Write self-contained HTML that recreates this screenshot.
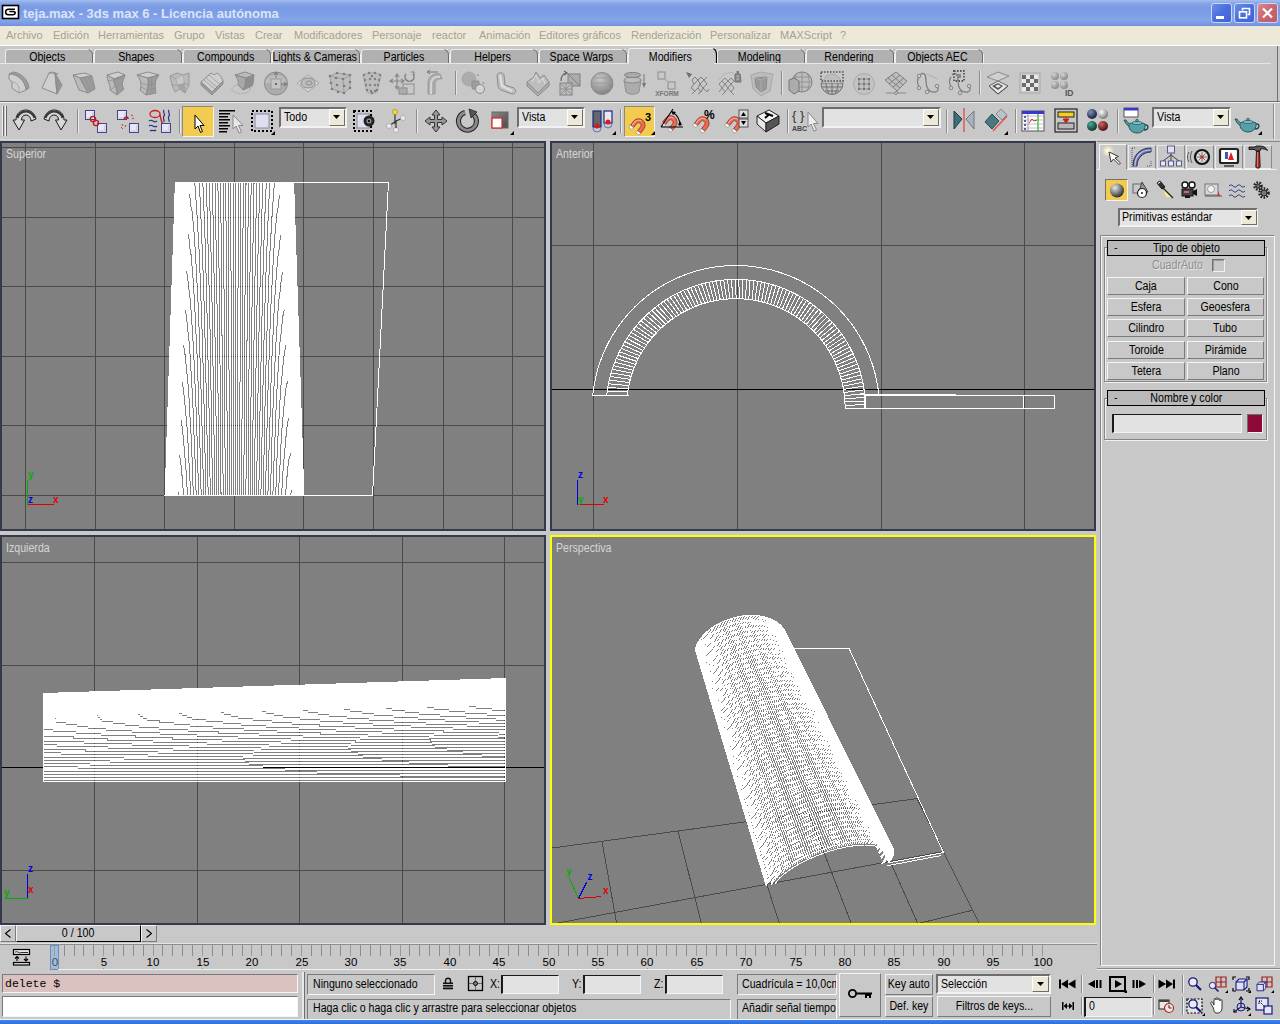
<!DOCTYPE html>
<html lang="es"><head><meta charset="utf-8"><title>teja.max - 3ds max 6 - Licencia autónoma</title>
<style>
html,body{margin:0;padding:0;}
body{width:1280px;height:1024px;position:relative;overflow:hidden;background:#c8c8c8;font-family:"Liberation Sans",sans-serif;font-size:11px;color:#000;}
div,svg{position:absolute;box-sizing:border-box;}
.t{white-space:nowrap;line-height:13px;}
.c{white-space:nowrap;line-height:13px;text-align:center;}
.btn{background:#c8c8c8;border:1px solid;border-color:#f4f4f4 #7a7a7a #7a7a7a #f4f4f4;text-align:center;white-space:nowrap;}
.sunk{border:1px solid;border-color:#7a7a7a #f4f4f4 #f4f4f4 #7a7a7a;}
svg{overflow:visible}
.sl,.sc{display:inline-block;font-size:12.5px;letter-spacing:0;transform:scaleX(.85);transform-origin:0 50%;white-space:nowrap}
.sc{transform-origin:50% 50%}
.fc{display:flex;justify-content:center;white-space:nowrap}
</style></head>
<body>
<!-- top -->
<div style="left:0px;top:0px;width:1280px;height:26px;background:linear-gradient(#a3bdee 0px,#8aa8e8 3px,#7b9ae4 7px,#7d9ee6 14px,#86a6ea 20px,#7a98e2 24px,#6f8cdc 26px);"></div>
<svg style="left:2px;top:5px" width="17" height="14" viewBox="0 0 17 14" ><rect x="0.5" y="0.5" width="16" height="13" fill="#fff" stroke="#000" stroke-width="1.6"/><path d="M13 4.2H6.5C4.6 4.2 3.6 5.4 3.6 7s1 2.8 2.9 2.8H10.6C12.4 9.800000000000001 13.2 9 13.2 7.800000000000001S12.400000000000002 6.4 11.2 6.4H7.3" fill="none" stroke="#000" stroke-width="1.5"/></svg>
<div class="t" style="left:23px;top:6px;font-weight:bold;font-size:13px;color:#dbe5f9;line-height:16px;">teja.max - 3ds max 6 - Licencia autónoma</div>
<div style="left:1211px;top:3px;width:21px;height:20px;background:linear-gradient(135deg,#6c8eea,#4a6fdd 50%,#3f63d4);border:1px solid #c9d6f4;border-radius:3px;"></div>
<div style="left:1234px;top:3px;width:21px;height:20px;background:linear-gradient(135deg,#6c8eea,#4a6fdd 50%,#3f63d4);border:1px solid #c9d6f4;border-radius:3px;"></div>
<div style="left:1257px;top:3px;width:21px;height:20px;background:linear-gradient(135deg,#d98a8f,#c8666f 50%,#bf5a66);border:1px solid #c9d6f4;border-radius:3px;"></div>
<div style="left:1216px;top:16px;width:8px;height:3px;background:#fff;"></div>
<svg style="left:1234px;top:3px" width="21" height="20" viewBox="0 0 21 20" ><path d="M8.5 7.500000000000001V5.5H15.5V11.5H13.5" fill="none" stroke="#fff" stroke-width="1.6"/><rect x="5.5" y="8.8" width="7" height="6" fill="none" stroke="#fff" stroke-width="1.6"/></svg>
<svg style="left:1257px;top:3px" width="21" height="20" viewBox="0 0 21 20" ><path d="M6 5.500000000000001L15 14.5M15 5.500000000000001L6 14.5" stroke="#fff" stroke-width="2.2"/></svg>
<div style="left:0px;top:26px;width:1280px;height:19px;background:#ece9d8;"></div>
<div class="t m" style="left:6px;top:29px;color:#a5a294;">Archivo</div>
<div class="t m" style="left:53px;top:29px;color:#a5a294;">Edición</div>
<div class="t m" style="left:98px;top:29px;color:#a5a294;">Herramientas</div>
<div class="t m" style="left:174px;top:29px;color:#a5a294;">Grupo</div>
<div class="t m" style="left:215px;top:29px;color:#a5a294;">Vistas</div>
<div class="t m" style="left:255px;top:29px;color:#a5a294;">Crear</div>
<div class="t m" style="left:294px;top:29px;color:#a5a294;">Modificadores</div>
<div class="t m" style="left:372px;top:29px;color:#a5a294;">Personaje</div>
<div class="t m" style="left:432px;top:29px;color:#a5a294;">reactor</div>
<div class="t m" style="left:479px;top:29px;color:#a5a294;">Animación</div>
<div class="t m" style="left:539px;top:29px;color:#a5a294;">Editores gráficos</div>
<div class="t m" style="left:631px;top:29px;color:#a5a294;">Renderización</div>
<div class="t m" style="left:710px;top:29px;color:#a5a294;">Personalizar</div>
<div class="t m" style="left:780px;top:29px;color:#a5a294;">MAXScript</div>
<div class="t m" style="left:840px;top:29px;color:#a5a294;">?</div>
<div style="left:0px;top:45px;width:1280px;height:1px;background:#fff;"></div>
<div style="left:5px;top:49px;width:87px;height:15px;background:#b1b1b1;border-top:1px solid #ececec;border-left:1px solid #ececec;border-radius:3px 0 0 0;"></div>
<svg style="left:86px;top:48px" width="8" height="17" viewBox="0 0 8 17" ><path d="M2.5 1.5C5 2.5 6.500000000000001 4 6.500000000000001 7V16" fill="none" stroke="#6b6b6b" stroke-width="1"/><path d="M7.500000000000001 6V16" fill="none" stroke="#f0f0f0" stroke-width="1"/></svg>
<div class="fc" style="left:5px;top:51px;width:85px;height:13px;line-height:13px;"><span class="sc">Objects</span></div>
<div style="left:94px;top:49px;width:87px;height:15px;background:#b1b1b1;border-top:1px solid #ececec;border-left:1px solid #ececec;border-radius:3px 0 0 0;"></div>
<svg style="left:175px;top:48px" width="8" height="17" viewBox="0 0 8 17" ><path d="M2.5 1.5C5 2.5 6.500000000000001 4 6.500000000000001 7V16" fill="none" stroke="#6b6b6b" stroke-width="1"/><path d="M7.500000000000001 6V16" fill="none" stroke="#f0f0f0" stroke-width="1"/></svg>
<div class="fc" style="left:94px;top:51px;width:85px;height:13px;line-height:13px;"><span class="sc">Shapes</span></div>
<div style="left:183px;top:49px;width:87px;height:15px;background:#b1b1b1;border-top:1px solid #ececec;border-left:1px solid #ececec;border-radius:3px 0 0 0;"></div>
<svg style="left:264px;top:48px" width="8" height="17" viewBox="0 0 8 17" ><path d="M2.5 1.5C5 2.5 6.500000000000001 4 6.500000000000001 7V16" fill="none" stroke="#6b6b6b" stroke-width="1"/><path d="M7.500000000000001 6V16" fill="none" stroke="#f0f0f0" stroke-width="1"/></svg>
<div class="fc" style="left:183px;top:51px;width:85px;height:13px;line-height:13px;"><span class="sc">Compounds</span></div>
<div style="left:272px;top:49px;width:87px;height:15px;background:#b1b1b1;border-top:1px solid #ececec;border-left:1px solid #ececec;border-radius:3px 0 0 0;"></div>
<svg style="left:353px;top:48px" width="8" height="17" viewBox="0 0 8 17" ><path d="M2.5 1.5C5 2.5 6.500000000000001 4 6.500000000000001 7V16" fill="none" stroke="#6b6b6b" stroke-width="1"/><path d="M7.500000000000001 6V16" fill="none" stroke="#f0f0f0" stroke-width="1"/></svg>
<div class="fc" style="left:272px;top:51px;width:85px;height:13px;line-height:13px;"><span class="sc">Lights &amp; Cameras</span></div>
<div style="left:361px;top:49px;width:87px;height:15px;background:#b1b1b1;border-top:1px solid #ececec;border-left:1px solid #ececec;border-radius:3px 0 0 0;"></div>
<svg style="left:442px;top:48px" width="8" height="17" viewBox="0 0 8 17" ><path d="M2.5 1.5C5 2.5 6.500000000000001 4 6.500000000000001 7V16" fill="none" stroke="#6b6b6b" stroke-width="1"/><path d="M7.500000000000001 6V16" fill="none" stroke="#f0f0f0" stroke-width="1"/></svg>
<div class="fc" style="left:361px;top:51px;width:85px;height:13px;line-height:13px;"><span class="sc">Particles</span></div>
<div style="left:450px;top:49px;width:87px;height:15px;background:#b1b1b1;border-top:1px solid #ececec;border-left:1px solid #ececec;border-radius:3px 0 0 0;"></div>
<svg style="left:531px;top:48px" width="8" height="17" viewBox="0 0 8 17" ><path d="M2.5 1.5C5 2.5 6.500000000000001 4 6.500000000000001 7V16" fill="none" stroke="#6b6b6b" stroke-width="1"/><path d="M7.500000000000001 6V16" fill="none" stroke="#f0f0f0" stroke-width="1"/></svg>
<div class="fc" style="left:450px;top:51px;width:85px;height:13px;line-height:13px;"><span class="sc">Helpers</span></div>
<div style="left:539px;top:49px;width:87px;height:15px;background:#b1b1b1;border-top:1px solid #ececec;border-left:1px solid #ececec;border-radius:3px 0 0 0;"></div>
<svg style="left:620px;top:48px" width="8" height="17" viewBox="0 0 8 17" ><path d="M2.5 1.5C5 2.5 6.500000000000001 4 6.500000000000001 7V16" fill="none" stroke="#6b6b6b" stroke-width="1"/><path d="M7.500000000000001 6V16" fill="none" stroke="#f0f0f0" stroke-width="1"/></svg>
<div class="fc" style="left:539px;top:51px;width:85px;height:13px;line-height:13px;"><span class="sc">Space Warps</span></div>
<div style="left:628px;top:48px;width:88px;height:16px;background:#c8c8c8;border-top:1px solid #f0f0f0;border-left:1px solid #f0f0f0;border-radius:3px 0 0 0;"></div>
<svg style="left:708px;top:47px" width="10" height="18" viewBox="0 0 10 18" ><path d="M5.500000000000001 1.5C8 3 8.5 5 8.5 8V17" fill="none" stroke="#000" stroke-width="1.2"/></svg>
<div class="fc" style="left:628px;top:51px;width:85px;height:13px;line-height:13px;"><span class="sc">Modifiers</span></div>
<div style="left:717px;top:49px;width:87px;height:15px;background:#b1b1b1;border-top:1px solid #ececec;border-left:1px solid #ececec;border-radius:3px 0 0 0;"></div>
<svg style="left:798px;top:48px" width="8" height="17" viewBox="0 0 8 17" ><path d="M2.5 1.5C5 2.5 6.500000000000001 4 6.500000000000001 7V16" fill="none" stroke="#6b6b6b" stroke-width="1"/><path d="M7.500000000000001 6V16" fill="none" stroke="#f0f0f0" stroke-width="1"/></svg>
<div class="fc" style="left:717px;top:51px;width:85px;height:13px;line-height:13px;"><span class="sc">Modeling</span></div>
<div style="left:806px;top:49px;width:87px;height:15px;background:#b1b1b1;border-top:1px solid #ececec;border-left:1px solid #ececec;border-radius:3px 0 0 0;"></div>
<svg style="left:887px;top:48px" width="8" height="17" viewBox="0 0 8 17" ><path d="M2.5 1.5C5 2.5 6.500000000000001 4 6.500000000000001 7V16" fill="none" stroke="#6b6b6b" stroke-width="1"/><path d="M7.500000000000001 6V16" fill="none" stroke="#f0f0f0" stroke-width="1"/></svg>
<div class="fc" style="left:806px;top:51px;width:85px;height:13px;line-height:13px;"><span class="sc">Rendering</span></div>
<div style="left:895px;top:49px;width:87px;height:15px;background:#b1b1b1;border-top:1px solid #ececec;border-left:1px solid #ececec;border-radius:3px 0 0 0;"></div>
<svg style="left:976px;top:48px" width="8" height="17" viewBox="0 0 8 17" ><path d="M2.5 1.5C5 2.5 6.500000000000001 4 6.500000000000001 7V16" fill="none" stroke="#6b6b6b" stroke-width="1"/><path d="M7.500000000000001 6V16" fill="none" stroke="#f0f0f0" stroke-width="1"/></svg>
<div class="fc" style="left:895px;top:51px;width:85px;height:13px;line-height:13px;"><span class="sc">Objects AEC</span></div>
<div style="left:0px;top:63px;width:1271px;height:1px;background:#e6e6e6;"></div>
<div style="left:1277px;top:46px;width:1px;height:56px;background:#6e6e6e;"></div>
<div style="left:629px;top:63px;width:85px;height:1px;background:#c8c8c8;"></div>
<div style="left:0px;top:101px;width:1280px;height:1px;background:#6e6e6e;"></div>
<div style="left:0px;top:102px;width:1280px;height:1px;background:#efefef;"></div>
<div style="left:0px;top:139px;width:1280px;height:1px;background:#d8d8d0;"></div>
<!-- toolbars -->
<svg style="left:4px;top:67px" width="32" height="32" viewBox="-16 -16 32 32"><path d="M6 7L9 5C8 -4 1 -10 -7 -11L-11 -9C-3 -9 5 -3 6 7Z" fill="#9c9c9c" stroke="#8c8c8c" stroke-width="1" stroke-linejoin="round"/><path d="M-11 -9C-3 -9 5 -3 6 7L-1 10L-8 5V-1L-11 -4Z" fill="#cfcfcf" stroke="#8c8c8c" stroke-width="1" stroke-linejoin="round"/><path d="M-8 -1C-3 -1 0 3 -1 10" fill="none" stroke="#a8a8a8"/></svg>
<svg style="left:36px;top:67px" width="32" height="32" viewBox="-16 -16 32 32"><path d="M-3 -10H3L5 11L-10 5Z" fill="#cfcfcf" stroke="#8c8c8c" stroke-width="1" stroke-linejoin="round"/><path d="M3 -10L10 2L5 11Z" fill="#9c9c9c" stroke="#8c8c8c" stroke-width="1" stroke-linejoin="round"/><path d="M4 -6L8 3M4 -2L7 6M4 2L6 8" stroke="#888" stroke-width="0.7"/><path d="M-3 -10L0 -11L6 -9L3 -10" fill="#bababa" stroke="#8c8c8c" stroke-width="1" stroke-linejoin="round"/></svg>
<svg style="left:68px;top:67px" width="32" height="32" viewBox="-16 -16 32 32"><path d="M-11 -8L1 -10L8 -7L-4 -5Z" fill="#cfcfcf" stroke="#8c8c8c" stroke-width="1" stroke-linejoin="round"/><path d="M-11 -8L-4 -5L4 10L-5 7Z" fill="#bababa" stroke="#8c8c8c" stroke-width="1" stroke-linejoin="round"/><path d="M-4 -5L8 -7L11 6L4 10Z" fill="#9c9c9c" stroke="#8c8c8c" stroke-width="1" stroke-linejoin="round"/><path d="M0 -5L7 7M4 -6L10 4" stroke="#8a8a8a" stroke-width="0.6"/></svg>
<svg style="left:100px;top:67px" width="32" height="32" viewBox="-16 -16 32 32"><path d="M-9 -8L2 -11L9 -8L-2 -4Z" fill="#cfcfcf" stroke="#8c8c8c" stroke-width="1" stroke-linejoin="round"/><path d="M-9 -8L-2 -4C-3 1 2 4 1 12L-6 7C-5 2 -9 -2 -9 -8Z" fill="#bababa" stroke="#8c8c8c" stroke-width="1" stroke-linejoin="round"/><path d="M-2 -4L9 -8C8 -3 4 0 8 6L1 12C2 4 -3 1 -2 -4Z" fill="#9c9c9c" stroke="#8c8c8c" stroke-width="1" stroke-linejoin="round"/><path d="M-6 7L3 1M-8 -2L6 -5" stroke="#8c8c8c" stroke-width="0.7"/></svg>
<svg style="left:132px;top:67px" width="32" height="32" viewBox="-16 -16 32 32"><path d="M-11 -8L0 -11L11 -8L0 -5Z" fill="#cfcfcf" stroke="#8c8c8c" stroke-width="1" stroke-linejoin="round"/><path d="M-11 -8L0 -5C1 0 0 6 -2 12L-8 7C-6 2 -7 -3 -11 -8Z" fill="#bababa" stroke="#8c8c8c" stroke-width="1" stroke-linejoin="round"/><path d="M0 -5L11 -8C6 -2 7 4 8 10L-2 12C0 6 1 0 0 -5Z" fill="#9c9c9c" stroke="#8c8c8c" stroke-width="1" stroke-linejoin="round"/><path d="M-7 0L0 2L7 0M-7 4L-1 7L8 5M4 -6C3 0 4 5 4 11" fill="none" stroke="#8a8a8a" stroke-width="0.6"/></svg>
<svg style="left:164px;top:67px" width="32" height="32" viewBox="-16 -16 32 32"><path d="M-10 -7L-3 -10L3 -8L9 -10L9 2L5 10L0 6L-5 9L-8 2Z" fill="#bababa" stroke="#9a9a9a" stroke-linejoin="round"/><path d="M-10 -7L-4 -4L3 -8M-4 -4L-2 2L0 6M3 -8L4 0L5 10M-8 2L-2 2L4 0L9 2" fill="none" stroke="#9a9a9a" stroke-width="0.8"/><path d="M-4 -4L3 -8L4 0L-2 2Z" fill="#cfcfcf" stroke="none" opacity="0.7"/><path d="M-2 2L4 0L5 10L0 6Z" fill="#9c9c9c" opacity="0.7"/></svg>
<svg style="left:196px;top:67px" width="32" height="32" viewBox="-16 -16 32 32"><path d="M-11 -1L-1 -10C1 -8 3 -8 5 -10C7 -9 9 -7 11 -2L0 9Z" fill="#cfcfcf" stroke="#8c8c8c" stroke-width="1" stroke-linejoin="round"/><path d="M-11 -1L0 9L11 -2V1L0 12L-11 2Z" fill="#9c9c9c" stroke="#8c8c8c" stroke-width="1" stroke-linejoin="round"/><path d="M-6 -5L5 4M-3 -8C-1 -6 6 0 8 1M-8 -3L3 6" fill="none" stroke="#909090" stroke-width="0.7"/></svg>
<svg style="left:228px;top:67px" width="32" height="32" viewBox="-16 -16 32 32"><ellipse cx="-3" cy="6" rx="9" ry="4.500000000000001" fill="none" stroke="#a8a8a8" stroke-dasharray="2 1"/><path d="M-9 -8L1 -11L10 -8L2 -5Z" fill="#bababa" stroke="#8c8c8c" stroke-width="1" stroke-linejoin="round"/><path d="M-9 -8L2 -5C1 -1 2 3 -1 7L-6 2C-5 -2 -7 -5 -9 -8Z" fill="#a8a8a8" stroke="#8c8c8c" stroke-width="1" stroke-linejoin="round"/><path d="M2 -5L10 -8C9 -4 10 0 8 3L-1 7C2 3 1 -1 2 -5Z" fill="#8e8e8e" stroke="#8c8c8c" stroke-width="1" stroke-linejoin="round"/></svg>
<svg style="left:260px;top:67px" width="32" height="32" viewBox="-16 -16 32 32"><circle cx="0" cy="0.5" r="11.5" fill="#acacac" stroke="#8c8c8c"/><path d="M-11 0A11.5 11.5 0 0 1 11 0" fill="#bdbdbd" stroke="none"/><rect x="-5" y="-4" width="10" height="10" fill="#c4c4c4" stroke="#999"/><rect x="-1" y="0" width="2" height="2" fill="#666"/><path d="M0 -5V-10M-2 -8L0 -11L2 -8M5 1H10M8 -1L11 1L8 3" fill="none" stroke="#777"/></svg>
<svg style="left:292px;top:67px" width="32" height="32" viewBox="-16 -16 32 32"><path d="M-11 0L0 -8L11 0L0 9Z" fill="#d4d4d4" stroke="#a6a6a6"/><ellipse cx="0" cy="0" rx="7" ry="5" fill="#bdbdbd" stroke="#8c8c8c"/><ellipse cx="1" cy="0" rx="3" ry="2" fill="none" stroke="#8c8c8c"/></svg>
<svg style="left:324px;top:67px" width="32" height="32" viewBox="-16 -16 32 32"><path d="M-10 -7L-3 -10L10 -8L10 5L4 10L-8 6Z" fill="#bdbdbd" stroke="#a0a0a0"/><path d="M-10 -7L3 -4L10 -8M3 -4L4 10" fill="none" stroke="#a0a0a0"/><circle cx="-10" cy="-7" r="1.3" fill="#7d7d7d"/><circle cx="-4" cy="-5" r="1.3" fill="#7d7d7d"/><circle cx="3" cy="-4" r="1.3" fill="#7d7d7d"/><circle cx="-3" cy="-10" r="1.3" fill="#7d7d7d"/><circle cx="4" cy="-9" r="1.3" fill="#7d7d7d"/><circle cx="10" cy="-8" r="1.3" fill="#7d7d7d"/><circle cx="-9" cy="0" r="1.3" fill="#7d7d7d"/><circle cx="-3" cy="2" r="1.3" fill="#7d7d7d"/><circle cx="4" cy="3" r="1.3" fill="#7d7d7d"/><circle cx="10" cy="-1" r="1.3" fill="#7d7d7d"/><circle cx="-8" cy="6" r="1.3" fill="#7d7d7d"/><circle cx="-2" cy="9" r="1.3" fill="#7d7d7d"/><circle cx="4" cy="10" r="1.3" fill="#7d7d7d"/><circle cx="10" cy="5" r="1.3" fill="#7d7d7d"/></svg>
<svg style="left:356px;top:67px" width="32" height="32" viewBox="-16 -16 32 32"><path d="M-9 -8C-4 -11 4 -11 9 -8L5 9C2 11 -2 11 -5 9Z" fill="#bdbdbd" stroke="#a4a4a4"/><circle cx="-8" cy="-8" r="1.2" fill="#808080"/><circle cx="-3" cy="-10" r="1.2" fill="#808080"/><circle cx="3" cy="-10" r="1.2" fill="#808080"/><circle cx="8" cy="-8" r="1.2" fill="#808080"/><circle cx="-7" cy="-3" r="1.2" fill="#808080"/><circle cx="-2" cy="-4" r="1.2" fill="#808080"/><circle cx="3" cy="-4" r="1.2" fill="#808080"/><circle cx="7" cy="-3" r="1.2" fill="#808080"/><circle cx="-6" cy="2" r="1.2" fill="#808080"/><circle cx="-2" cy="2" r="1.2" fill="#808080"/><circle cx="3" cy="2" r="1.2" fill="#808080"/><circle cx="6" cy="2" r="1.2" fill="#808080"/><circle cx="-5" cy="7" r="1.2" fill="#808080"/><circle cx="-1" cy="8" r="1.2" fill="#808080"/><circle cx="3" cy="8" r="1.2" fill="#808080"/><circle cx="5" cy="7" r="1.2" fill="#808080"/><circle cx="0" cy="-7" r="1.2" fill="#808080"/><circle cx="0" cy="10" r="1.2" fill="#808080"/></svg>
<svg style="left:388px;top:67px" width="32" height="32" viewBox="-16 -16 32 32"><rect x="-1" y="1" width="11" height="10" fill="none" stroke="#8c8c8c"/><rect x="-5" y="5" width="8" height="6" fill="#acacac" stroke="#8c8c8c"/><path d="M-7 -8V5M-13 -2H-1M-9 -6L-7 -9L-5 -6M-9 3L-7 6L-5 3M-11 -4L-14 -2L-11 0M-3 -4L0 -2L-3 0" fill="none" stroke="#888" stroke-width="1.2"/><path d="M2 -9A4.500000000000001 4.500000000000001 0 1 0 9 -9" fill="none" stroke="#808080" stroke-width="1.5"/><path d="M7 -11H10V-8" fill="none" stroke="#808080"/></svg>
<svg style="left:419px;top:67px" width="32" height="32" viewBox="-16 -16 32 32"><path d="M-7 11V0C-7 -6 -2 -10 5 -9L7 -4C2 -5 0 -2 0 2V11Z" fill="#acacac" stroke="#9a9a9a"/><path d="M-4 11V1C-4 -4 0 -7 5 -6" fill="none" stroke="#d4d4d4" stroke-width="2"/><path d="M-7 -11H3M-5 -13L-8 -11L-5 -9" fill="none" stroke="#777"/></svg>
<div style="left:455px;top:71px;width:1px;height:24px;background:#8c8c8c;"></div>
<div style="left:456px;top:71px;width:1px;height:24px;background:#e4e4e4;"></div>
<svg style="left:458px;top:67px" width="32" height="32" viewBox="-16 -16 32 32"><circle cx="-5" cy="-4" r="7" fill="#acacac" stroke="#a8a8a8"/><rect x="-2" y="-2" width="7" height="8" rx="1" fill="#9e9e9e" stroke="#8c8c8c"/><circle cx="6" cy="6" r="4.500000000000001" fill="#d4d4d4" stroke="#8c8c8c"/><path d="M3 -9L5 -7M9 -1L10 1" stroke="#8c8c8c"/></svg>
<svg style="left:490px;top:67px" width="32" height="32" viewBox="-16 -16 32 32"><path d="M-9 -8C-8 -11 -3 -11 -2 -8L-1 2L8 5C11 7 10 11 6 11L-5 7C-7 6 -8 4 -8 2Z" fill="#c0c0c0" stroke="#8c8c8c" stroke-width="1" stroke-linejoin="round"/><path d="M-6 -8L-4 3L6 8" fill="none" stroke="#e0e0e0" stroke-width="2"/></svg>
<svg style="left:522px;top:67px" width="32" height="32" viewBox="-16 -16 32 32"><path d="M-11 -1L-4 -6L-2 -11L2 -5L6 -8L11 -1L0 10Z" fill="#bdbdbd" stroke="#8c8c8c" stroke-width="1" stroke-linejoin="round"/><path d="M-11 -1V3L0 13L11 3V-1L0 10Z" fill="#acacac" stroke="#8c8c8c" stroke-width="1" stroke-linejoin="round"/><path d="M-6 -1L-2 -8L1 0L5 -5L7 1" fill="none" stroke="#ddd"/></svg>
<svg style="left:554px;top:67px" width="32" height="32" viewBox="-16 -16 32 32"><rect x="-2" y="-9" width="12" height="12" fill="#acacac" stroke="#808080"/><path d="M-2 -9L10 3" stroke="#808080"/><rect x="-10" y="0" width="12" height="12" fill="#bdbdbd" stroke="#808080"/><path d="M-10 6H2M-4 0V12M-10 0L2 12M-10 12L2 0" stroke="#909090" fill="none"/><path d="M-9 -2C-9 -7 -7 -9 -4 -10M-6 -12L-3 -10L-6 -8" fill="none" stroke="#666" stroke-width="1.3"/></svg>
<svg style="left:586px;top:67px" width="32" height="32" viewBox="-16 -16 32 32"><defs><radialGradient id="sg" cx="0.4" cy="0.3" r="0.7"><stop offset="0" stop-color="#c8c8c8"/><stop offset="1" stop-color="#848484"/></radialGradient></defs><circle cx="0" cy="0.5" r="11" fill="url(#sg)" stroke="#8c8c8c"/><path d="M-11 0H11M-9 -5H9M-9 5H9" stroke="#9c9c9c" fill="none"/></svg>
<svg style="left:617px;top:67px" width="32" height="32" viewBox="-16 -16 32 32"><path d="M-9 -3L-7 9C-4 12 3 12 6 9L8 -3Z" fill="#acacac" stroke="#909090"/><ellipse cx="-0.5" cy="-3" rx="8.5" ry="3" fill="#bdbdbd" stroke="#888"/><ellipse cx="-0.5" cy="-8" rx="8" ry="2.5" fill="#acacac" stroke="#808080"/><path d="M11 -9V3" stroke="#777"/><path d="M9 0H13L11 5Z" fill="#777"/></svg>
<svg style="left:651px;top:67px" width="32" height="32" viewBox="-16 -16 32 32"><rect x="-9" y="-11" width="7" height="7" fill="none" stroke="#8c8c8c"/><rect x="1" y="-1" width="7" height="7" fill="none" stroke="#8c8c8c"/><path d="M-2 -4L1 -1" stroke="#b4b4b4" stroke-width="2"/><text x="0" y="13" font-size="6.5" font-weight="bold" text-anchor="middle" fill="#767676" font-family="Liberation Sans, sans-serif">XFORM</text></svg>
<svg style="left:683px;top:67px" width="32" height="32" viewBox="-16 -16 32 32"><path d="M-13 -11L-7 -9L-10 -5Z" fill="#6e6e6e"/><path d="M-7 -3L-4 -6L-1 -3L2 -6L5 -3L8 -6M-7 -3L-5 1L-1 -3L1 1L5 -3L8 1M-5 1L-8 5L-4 8L-1 5L1 1M1 1L4 5L8 1M-1 5L2 9L4 5L8 9M-4 8L-7 11M2 9L-1 11M8 9L10 6" fill="none" stroke="#7e7e7e" stroke-width="1"/></svg>
<svg style="left:714px;top:67px" width="32" height="32" viewBox="-16 -16 32 32"><path d="M-11 1L-8 -2L-5 1L-2 -2L1 1L4 -2M-11 1L-8 5L-5 1M-5 1L-2 5L1 1L4 5M-8 5L-11 9M-8 5L-5 9L-2 5L1 9L4 5M-8 -2L-5 -5L-2 -2L1 -5L4 -2M-5 9L-8 12M1 9L4 12" fill="none" stroke="#858585"/><path d="M-11 -3C-7 -10 -1 -11 4 -10" fill="none" stroke="#b4b4b4"/><path d="M5 -9H10L11 -1H5Z" fill="#8c8c8c" stroke="#707070"/><rect x="6.500000000000001" y="-12" width="2.5" height="3" fill="#7a7a7a"/><path d="M6.500000000000001 -7H9M6.500000000000001 -4H9" stroke="#ccc" stroke-width="0.8"/></svg>
<svg style="left:746px;top:67px" width="32" height="32" viewBox="-16 -16 32 32"><path d="M-11 -8L-2 -11L11 -9L8 8L-1 13L-9 6Z" fill="#bcbcbc" stroke="#a8a8a8"/><path d="M-7 -5L5 -6L4 6L-1 9L-6 4Z" fill="#999" stroke="#8c8c8c"/><path d="M-7 -5L-1 -3L-1 9M-1 -3L5 -6" fill="none" stroke="#aaa"/></svg>
<div style="left:781px;top:71px;width:1px;height:24px;background:#8c8c8c;"></div>
<div style="left:782px;top:71px;width:1px;height:24px;background:#e4e4e4;"></div>
<svg style="left:784px;top:67px" width="32" height="32" viewBox="-16 -16 32 32"><circle cx="2" cy="-1" r="10" fill="#bdbdbd" stroke="#808080"/><path d="M-8 -1H12M-6 -6H10M-6 4H10M2 -11V9M-3 -10C-6 -4 -6 2 -3 8M7 -10C10 -4 10 2 7 8" fill="none" stroke="#8a8a8a" stroke-width="0.8"/><path d="M-11 -3L-6 -5L-1 -2V8L-6 11L-11 7Z" fill="#acacac" stroke="#777"/></svg>
<svg style="left:816px;top:67px" width="32" height="32" viewBox="-16 -16 32 32"><path d="M-11 0A11 11.5 0 0 0 11 0Z" fill="#bdbdbd" stroke="#707070"/><path d="M-10 4H10M-7 8H7M-6 0C-6 5 -4 9 -3 11M0 0V11.5M6 0C6 5 4 9 3 11" fill="none" stroke="#707070"/><path d="M-9 0A9 9 0 0 1 9 0" fill="#bdbdbd" stroke="#aaa"/><rect x="-11" y="-11" width="22" height="9" fill="none" stroke="#555" stroke-width="1.6" stroke-dasharray="1.6 1.4"/></svg>
<svg style="left:848px;top:67px" width="32" height="32" viewBox="-16 -16 32 32"><circle cx="0" cy="1" r="10.5" fill="#c2c2c2" stroke="#aaa"/><path d="M-5 -4H5V6H-5ZM0 -4V6M-5 1H5" fill="none" stroke="#888"/><rect x="-6" y="-5" width="2" height="2" fill="#777"/><rect x="-6" y="0" width="2" height="2" fill="#777"/><rect x="-6" y="5" width="2" height="2" fill="#777"/><rect x="-1" y="-5" width="2" height="2" fill="#777"/><rect x="-1" y="0" width="2" height="2" fill="#777"/><rect x="-1" y="5" width="2" height="2" fill="#777"/><rect x="4" y="-5" width="2" height="2" fill="#777"/><rect x="4" y="0" width="2" height="2" fill="#777"/><rect x="4" y="5" width="2" height="2" fill="#777"/></svg>
<svg style="left:880px;top:67px" width="32" height="32" viewBox="-16 -16 32 32"><path d="M0 -11L11 -2L1 8L-11 -3Z" fill="#bdbdbd" stroke="#808080"/><path d="M-4 -8L7 2M-8 -5L4 5M4 -8L-7 1M8 -5L-3 4" fill="none" stroke="#808080"/><path d="M-10 10H10M1 8V10" stroke="#888" fill="none"/><circle cx="0" cy="10" r="1.5" fill="#ccc" stroke="#888"/></svg>
<svg style="left:912px;top:67px" width="32" height="32" viewBox="-16 -16 32 32"><path d="M-9 -6C-12 -2 -10 2 -9 4M-8 -8C-4 -12 -2 -8 -2 -2C-2 4 0 10 8 9C11 8 10 4 9 3" fill="none" stroke="#808080" stroke-width="1.3"/><path d="M-2 -9L10 -4" stroke="#b0b0b0"/><circle cx="-9" cy="-7" r="1.8" fill="#ccc" stroke="#888"/><circle cx="-9" cy="5" r="1.8" fill="#ccc" stroke="#888"/><circle cx="-1" cy="9" r="1.8" fill="#ccc" stroke="#888"/><circle cx="9" cy="3" r="1.8" fill="#ccc" stroke="#888"/></svg>
<svg style="left:944px;top:67px" width="32" height="32" viewBox="-16 -16 32 32"><path d="M-9 -6C-12 -2 -10 2 -9 4M-8 -8C-4 -12 -2 -8 -2 -2C-2 4 0 10 8 9C11 8 10 4 9 3" fill="none" stroke="#808080" stroke-width="1.3"/><rect x="-6" y="-12" width="10" height="10" fill="none" stroke="#555" stroke-width="1.8" stroke-dasharray="1.5 1.5"/><rect x="-3" y="-9" width="4" height="4" fill="#888"/><circle cx="-9" cy="5" r="1.8" fill="#ccc" stroke="#888"/><circle cx="0" cy="10" r="1.8" fill="#ccc" stroke="#888"/><circle cx="9" cy="3" r="1.8" fill="#ccc" stroke="#888"/></svg>
<div style="left:979px;top:71px;width:1px;height:24px;background:#8c8c8c;"></div>
<div style="left:980px;top:71px;width:1px;height:24px;background:#e4e4e4;"></div>
<svg style="left:982px;top:67px" width="32" height="32" viewBox="-16 -16 32 32"><path d="M-11 -6L0 -11L11 -7L0 -2Z" fill="#cfcfcf" stroke="#8c8c8c"/><path d="M-9 3L0 -2L10 3L0 11Z" fill="#e6e6e6" stroke="#666"/><path d="M-6 3L0 0L5 3L0 7ZM-3 3L0 5L3 3L0 1.5Z" fill="#555"/><path d="M-9 3L0 11L10 3" fill="none" stroke="#555"/></svg>
<svg style="left:1014px;top:67px" width="32" height="32" viewBox="-16 -16 32 32"><rect x="-10" y="-10" width="20" height="20" fill="#cdcdcd" stroke="#a8a8a8"/><rect x="-8" y="-8" width="4" height="4" fill="#6a6a6a"/><rect x="-8" y="-4" width="4" height="4" fill="#e8e8e8"/><rect x="-8" y="0" width="4" height="4" fill="#6a6a6a"/><rect x="-8" y="4" width="4" height="4" fill="#e8e8e8"/><rect x="-4" y="-8" width="4" height="4" fill="#e8e8e8"/><rect x="-4" y="-4" width="4" height="4" fill="#6a6a6a"/><rect x="-4" y="0" width="4" height="4" fill="#e8e8e8"/><rect x="-4" y="4" width="4" height="4" fill="#6a6a6a"/><rect x="0" y="-8" width="4" height="4" fill="#6a6a6a"/><rect x="0" y="-4" width="4" height="4" fill="#e8e8e8"/><rect x="0" y="0" width="4" height="4" fill="#6a6a6a"/><rect x="0" y="4" width="4" height="4" fill="#e8e8e8"/><rect x="4" y="-8" width="4" height="4" fill="#e8e8e8"/><rect x="4" y="-4" width="4" height="4" fill="#6a6a6a"/><rect x="4" y="0" width="4" height="4" fill="#e8e8e8"/><rect x="4" y="4" width="4" height="4" fill="#6a6a6a"/></svg>
<svg style="left:1045px;top:67px" width="32" height="32" viewBox="-16 -16 32 32"><defs><radialGradient id="sg2" cx="0.35" cy="0.3" r="0.7"><stop offset="0" stop-color="#d4d4d4"/><stop offset="1" stop-color="#8a8a8a"/></radialGradient></defs><circle cx="-6" cy="-7" r="4" fill="url(#sg2)"/><circle cx="3" cy="-7" r="4" fill="url(#sg2)"/><circle cx="-6" cy="2" r="4" fill="url(#sg2)"/><circle cx="3" cy="2" r="4" fill="url(#sg2)"/><text x="4" y="13" font-size="8.5" font-weight="bold" fill="#555" font-family="Liberation Sans, sans-serif">ID</text></svg>
<div style="left:2px;top:106px;width:1px;height:30px;background:#f0f0f0;"></div>
<div style="left:3px;top:106px;width:1px;height:30px;background:#6a6a6a;"></div>
<div style="left:5px;top:106px;width:1px;height:30px;background:#f0f0f0;"></div>
<div style="left:6px;top:106px;width:1px;height:30px;background:#6a6a6a;"></div>
<svg style="left:8px;top:105px" width="32" height="32" viewBox="-16 -16 32 32"><path d="M-8 -1C-8 -8 -3 -11 2 -11C7 -11 11 -7 12 -2L7 0C7 -3 5 -6 2 -6C-1 -6 -2.5 -4 -2.5 -1L0.5 -1L-5 9L-11 -1Z" fill="#dadada" stroke="#1a1a1a" stroke-width="1" stroke-linejoin="round"/><path d="M-6.500000000000001 -3C-6 -7 -2 -9.5 2 -9.5C6 -9.5 9.5 -6.500000000000001 10.5 -3" fill="none" stroke="#3a3a3a" stroke-width="2.2"/></svg>
<svg style="left:40px;top:105px" width="32" height="32" viewBox="-16 -16 32 32"><g transform="scale(-1,1)"><path d="M-8 -1C-8 -8 -3 -11 2 -11C7 -11 11 -7 12 -2L7 0C7 -3 5 -6 2 -6C-1 -6 -2.5 -4 -2.5 -1L0.5 -1L-5 9L-11 -1Z" fill="#dadada" stroke="#1a1a1a" stroke-width="1" stroke-linejoin="round"/><path d="M-6.500000000000001 -3C-6 -7 -2 -9.5 2 -9.5C6 -9.5 9.5 -6.500000000000001 10.5 -3" fill="none" stroke="#3a3a3a" stroke-width="2.2"/></g></svg>
<div style="left:77px;top:109px;width:1px;height:24px;background:#8c8c8c;"></div><div style="left:78px;top:109px;width:1px;height:24px;background:#ececec;"></div>
<svg style="left:80px;top:105px" width="32" height="32" viewBox="-16 -16 32 32"><rect x="-10.5" y="-10.5" width="9" height="9" fill="#e8e8f4" stroke="#44448a"/><path d="M-9 -3H-3V-9" fill="none" stroke="#c0c0dc"/><rect x="1.5" y="2.5" width="9" height="9" fill="#e8e8f4" stroke="#44448a"/><path d="M3 10H9V4" fill="none" stroke="#c0c0dc"/><circle cx="-3" cy="-2" r="2.6" fill="none" stroke="#c01818" stroke-width="1.4"/><circle cx="0" cy="2" r="2.6" fill="none" stroke="#c01818" stroke-width="1.4"/></svg>
<svg style="left:112px;top:105px" width="32" height="32" viewBox="-16 -16 32 32"><rect x="-10.5" y="-10.5" width="9" height="9" fill="#e8e8f4" stroke="#44448a"/><path d="M-9 -3H-3V-9" fill="none" stroke="#c0c0dc"/><rect x="1.5" y="2.5" width="9" height="9" fill="#e8e8f4" stroke="#44448a"/><path d="M3 10H9V4" fill="none" stroke="#c0c0dc"/><path d="M-4 -2C-2 -5 0 -4 0 -2" fill="none" stroke="#c01818" stroke-width="1.6"/><path d="M3 -6L5 -5M6 -3L4 -2M-6 3L-5 5M-3 6L-2 4M-7 6L-5 8" stroke="#c04040" stroke-width="1"/></svg>
<svg style="left:144px;top:105px" width="32" height="32" viewBox="-16 -16 32 32"><path d="M4 -11C2 -9 6 -7 4 -5C2 -3 5 -1 4 1M9 -11C7 -9 11 -7 9 -5C7 -3 10 -1 9 1M-11 0C-8 -3 -6 3 -3 0M-11 5C-8 2 -6 8 -3 5M-10 10C-8 8 -6 11 -4 9" fill="none" stroke="#203080" stroke-width="1.2"/><ellipse cx="-5" cy="-7" rx="5" ry="3.5" fill="none" stroke="#d01818" stroke-width="1.3"/><path d="M0 -6C1 -2 1 1 3 3" fill="none" stroke="#d01818" stroke-width="1.3"/><rect x="1.5" y="2.5" width="9" height="9" fill="#e8e8f4" stroke="#44448a"/><path d="M3 10H9V4" fill="none" stroke="#c0c0dc"/></svg>
<div style="left:179px;top:109px;width:1px;height:24px;background:#8c8c8c;"></div><div style="left:180px;top:109px;width:1px;height:24px;background:#ececec;"></div>
<div style="left:182px;top:106px;width:32px;height:31px;background:#f2cb4f;border:1px solid;border-color:#8a8a8a #f4f4f4 #f4f4f4 #8a8a8a;"></div>
<svg style="left:182px;top:108px" width="32" height="32" viewBox="-16 -16 32 32"><path d="M-3 -9L-3 5L0 2L2.5 8.5L4.500000000000001 7.500000000000001L2 1.5L6 1.5Z" fill="#fff" stroke="#000" stroke-width="1" stroke-linejoin="miter"/></svg>
<svg style="left:215px;top:105px" width="32" height="32" viewBox="-16 -16 32 32"><rect x="-12" y="-11" width="16" height="1.5" fill="#000"/><rect x="-12" y="-8" width="11" height="1.5" fill="#000"/><rect x="-12" y="-5" width="9" height="1.5" fill="#000"/><rect x="-12" y="-2" width="11" height="1.5" fill="#000"/><rect x="-12" y="1" width="9" height="1.5" fill="#000"/><rect x="-12" y="4" width="11" height="1.5" fill="#000"/><rect x="-12" y="7" width="9" height="1.5" fill="#000"/><rect x="-12" y="10" width="8" height="1.5" fill="#000"/><path d="M2 -6L2 8L5 5L8 12L10.5 11L7.500000000000001 4.5L12 4.5Z" fill="#e8e8e8" stroke="#888" stroke-width="1"/></svg>
<svg style="left:246px;top:105px" width="32" height="32" viewBox="-16 -16 32 32"><rect x="-10" y="-10" width="20" height="20" fill="none" stroke="#000" stroke-width="2" stroke-dasharray="2 2"/><rect x="-7" y="-7" width="14" height="14" fill="#dedeec" stroke="#8888a8"/></svg>
<svg style="left:271px;top:131px" width="4" height="4" viewBox="0 0 4 4" ><path d="M4 0V4H0Z" fill="#000"/></svg>
<div style="left:279px;top:107px;width:68px;height:21px;background:#e2e2e2;border:2px solid;border-color:#6e6e6e #f2f2f2 #f2f2f2 #6e6e6e;"></div><div class="t" style="left:284px;top:110px;line-height:14px;"><span class="sl">Todo</span></div><div style="left:329px;top:109px;width:16px;height:17px;background:#ece9d8;border:1px solid;border-color:#fff #716f64 #716f64 #fff;"></div><svg style="left:333px;top:115px" width="8" height="4" viewBox="0 0 8 4" ><path d="M0 0H7L3.5 4Z" fill="#000"/></svg>
<svg style="left:348px;top:105px" width="32" height="32" viewBox="-16 -16 32 32"><rect x="-10" y="-10" width="17" height="20" fill="none" stroke="#000" stroke-width="2" stroke-dasharray="2 2"/><rect x="-7" y="-7" width="12" height="14" fill="#dedeec" stroke="#8888a8"/><circle cx="5" cy="0" r="5.5" fill="#222"/><circle cx="5" cy="0" r="2.5" fill="#999"/><circle cx="5" cy="0" r="1.2" fill="#111"/></svg>
<svg style="left:380px;top:105px" width="32" height="32" viewBox="-16 -16 32 32"><path d="M-1 -8V3M-7 5L0 0L7 -3" stroke="#333" stroke-width="1.2" fill="none"/><circle cx="-1" cy="-9" r="2.6" fill="#f0d838" stroke="#a09020" stroke-width="0.6"/><circle cx="-7" cy="5" r="2.6" fill="#e8e8e8" stroke="#999" stroke-width="0.6"/><circle cx="7" cy="-3" r="2.6" fill="#e8e8e8" stroke="#999" stroke-width="0.6"/><circle cx="0" cy="9" r="2.6" fill="#e8e8e8" stroke="#999" stroke-width="0.6"/><path d="M0 0V7" stroke="#333" stroke-width="1.2"/></svg>
<div style="left:416px;top:109px;width:1px;height:24px;background:#8c8c8c;"></div><div style="left:417px;top:109px;width:1px;height:24px;background:#ececec;"></div>
<svg style="left:420px;top:105px" width="32" height="32" viewBox="-16 -16 32 32"><path d="M0 -11L-4 -6H-1.5V-1.5H-6V-4L-11 0L-6 4V1.5H-1.5V6H-4L0 11L4 6H1.5V1.5H6V4L11 0L6 -4V-1.5H1.5V-6H4Z" fill="#9a9a9a" stroke="#333" stroke-width="1"/></svg>
<svg style="left:452px;top:105px" width="32" height="32" viewBox="-16 -16 32 32"><path d="M-3 -8.5A9 9 0 1 0 6 -6" fill="none" stroke="#222" stroke-width="5"/><path d="M-3 -8.5A9 9 0 1 0 6 -6" fill="none" stroke="#8a8a8a" stroke-width="3"/><path d="M1 -12L9 -9L3 -3Z" fill="#555" stroke="#222" stroke-width="0.8"/></svg>
<svg style="left:484px;top:105px" width="32" height="32" viewBox="-16 -16 32 32"><defs><linearGradient id="scg" x1="0" y1="0" x2="1" y2="1"><stop offset="0" stop-color="#8a8a8a"/><stop offset="1" stop-color="#4a4a4a"/></linearGradient></defs><rect x="-8" y="-9" width="16" height="16" fill="url(#scg)" stroke="#666"/><rect x="-8" y="-3" width="10" height="10" fill="#fff" stroke="#e02020" stroke-width="1.2"/></svg>
<svg style="left:510px;top:131px" width="4" height="4" viewBox="0 0 4 4" ><path d="M4 0V4H0Z" fill="#000"/></svg>
<div style="left:517px;top:107px;width:68px;height:21px;background:#e2e2e2;border:2px solid;border-color:#6e6e6e #f2f2f2 #f2f2f2 #6e6e6e;"></div><div class="t" style="left:522px;top:110px;line-height:14px;"><span class="sl">Vista</span></div><div style="left:567px;top:109px;width:16px;height:17px;background:#ece9d8;border:1px solid;border-color:#fff #716f64 #716f64 #fff;"></div><svg style="left:571px;top:115px" width="8" height="4" viewBox="0 0 8 4" ><path d="M0 0H7L3.5 4Z" fill="#000"/></svg>
<svg style="left:586px;top:105px" width="32" height="32" viewBox="-16 -16 32 32"><rect x="-9" y="-10" width="8" height="16" fill="#666" stroke="#1a2a80" stroke-width="1.2"/><rect x="2" y="-10" width="8" height="12" fill="#e8e8f0" stroke="#1a2a80" stroke-width="1.2"/><circle cx="-5" cy="5" r="2.5" fill="#e01818"/><circle cx="6" cy="1" r="2.5" fill="#e01818"/><path d="M-9 7A4 4 0 0 0 -1 7M2 3A4 4 0 0 0 10 3" fill="none" stroke="#4060c0" stroke-width="0.8"/></svg>
<svg style="left:612px;top:131px" width="4" height="4" viewBox="0 0 4 4" ><path d="M4 0V4H0Z" fill="#000"/></svg>
<div style="left:620px;top:109px;width:1px;height:24px;background:#8c8c8c;"></div><div style="left:621px;top:109px;width:1px;height:24px;background:#ececec;"></div>
<div style="left:624px;top:106px;width:31px;height:31px;background:#f2cb4f;border:1px solid;border-color:#8a8a8a #f4f4f4 #f4f4f4 #8a8a8a;"></div>
<svg style="left:624px;top:105px" width="32" height="32" viewBox="-16 -16 32 32"><g transform="translate(-2,5) rotate(38)"><path d="M-6.500000000000001 4V-1A6.500000000000001 6.500000000000001 0 0 1 6.500000000000001 -1V4H2.5V-1A2.5 2.5 0 0 0 -2.5 -1V4Z" fill="#ec6a52" stroke="#8a2a1a" stroke-width="0.7"/><path d="M-5 3V-1A5 5 0 0 1 0 -6" fill="none" stroke="#f8b0a0" stroke-width="1"/><rect x="-6.500000000000001" y="4" width="4" height="2.6" fill="#fff" stroke="#777" stroke-width="0.5"/><rect x="2.5" y="4" width="4" height="2.6" fill="#fff" stroke="#777" stroke-width="0.5"/></g><text x="5" y="0" font-size="11" font-weight="bold" font-family="Liberation Sans, sans-serif" fill="#000">3</text></svg>
<svg style="left:651px;top:131px" width="4" height="4" viewBox="0 0 4 4" ><path d="M4 0V4H0Z" fill="#000"/></svg>
<svg style="left:656px;top:105px" width="32" height="32" viewBox="-16 -16 32 32"><g transform="translate(-2,2) rotate(38)"><path d="M-6.500000000000001 4V-1A6.500000000000001 6.500000000000001 0 0 1 6.500000000000001 -1V4H2.5V-1A2.5 2.5 0 0 0 -2.5 -1V4Z" fill="#ec6a52" stroke="#8a2a1a" stroke-width="0.7"/><path d="M-5 3V-1A5 5 0 0 1 0 -6" fill="none" stroke="#f8b0a0" stroke-width="1"/><rect x="-6.500000000000001" y="4" width="4" height="2.6" fill="#fff" stroke="#777" stroke-width="0.5"/><rect x="2.5" y="4" width="4" height="2.6" fill="#fff" stroke="#777" stroke-width="0.5"/></g><path d="M-11 6H11M-11 6L1 -12M0 -9C6 -6 8 0 8 5" fill="none" stroke="#000" stroke-width="1.1"/><path d="M-1 -10L4 -9L1 -6ZM6 4L10 4L8 0Z" fill="#000"/></svg>
<svg style="left:688px;top:105px" width="32" height="32" viewBox="-16 -16 32 32"><g transform="translate(-2,3) rotate(38)"><path d="M-6.500000000000001 4V-1A6.500000000000001 6.500000000000001 0 0 1 6.500000000000001 -1V4H2.5V-1A2.5 2.5 0 0 0 -2.5 -1V4Z" fill="#ec6a52" stroke="#8a2a1a" stroke-width="0.7"/><path d="M-5 3V-1A5 5 0 0 1 0 -6" fill="none" stroke="#f8b0a0" stroke-width="1"/><rect x="-6.500000000000001" y="4" width="4" height="2.6" fill="#fff" stroke="#777" stroke-width="0.5"/><rect x="2.5" y="4" width="4" height="2.6" fill="#fff" stroke="#777" stroke-width="0.5"/></g><text x="0" y="-2" font-size="12" font-weight="bold" font-family="Liberation Sans, sans-serif" fill="#000">%</text></svg>
<svg style="left:720px;top:105px" width="32" height="32" viewBox="-16 -16 32 32"><g transform="translate(-2,3) rotate(38)"><path d="M-6.500000000000001 4V-1A6.500000000000001 6.500000000000001 0 0 1 6.500000000000001 -1V4H2.5V-1A2.5 2.5 0 0 0 -2.5 -1V4Z" fill="#ec6a52" stroke="#8a2a1a" stroke-width="0.7"/><path d="M-5 3V-1A5 5 0 0 1 0 -6" fill="none" stroke="#f8b0a0" stroke-width="1"/><rect x="-6.500000000000001" y="4" width="4" height="2.6" fill="#fff" stroke="#777" stroke-width="0.5"/><rect x="2.5" y="4" width="4" height="2.6" fill="#fff" stroke="#777" stroke-width="0.5"/></g><rect x="3" y="-11" width="9" height="8" fill="#ddd" stroke="#555"/><rect x="3" y="-2" width="9" height="8" fill="#ddd" stroke="#555"/><path d="M5 -5H10L7.500000000000001 -9ZM5 0H10L7.500000000000001 4Z" fill="#000"/></svg>
<svg style="left:752px;top:105px" width="32" height="32" viewBox="-16 -16 32 32"><path d="M-11 -5L1 -11L11 -5L-2 2Z" fill="#f4f4f4" stroke="#222"/><path d="M-11 -5L-2 2V11L-11 3Z" fill="#e8e8e8" stroke="#222"/><path d="M-2 2L11 -5V3L-2 11Z" fill="#555" stroke="#222"/><path d="M-3 -8L5 -5M1 -6.500000000000001L-3 -3" stroke="#000" stroke-width="2"/></svg>
<div style="left:787px;top:109px;width:1px;height:24px;background:#8c8c8c;"></div><div style="left:788px;top:109px;width:1px;height:24px;background:#ececec;"></div>
<svg style="left:788px;top:105px" width="32" height="32" viewBox="-16 -16 32 32"><text x="-12" y="-1" font-size="13" font-family="Liberation Sans, sans-serif" fill="#333">{ }</text><text x="-12" y="10" font-size="7" font-weight="bold" font-family="Liberation Sans, sans-serif" fill="#444">ABC</text><path d="M4 -9L4 6L7 3L10 10L12.5 9L9.5 2.5L14 2.5Z" fill="#eee" stroke="#888" stroke-width="1"/></svg>
<div style="left:822px;top:107px;width:119px;height:21px;background:#e2e2e2;border:2px solid;border-color:#6e6e6e #f2f2f2 #f2f2f2 #6e6e6e;"></div><div style="left:923px;top:109px;width:16px;height:17px;background:#ece9d8;border:1px solid;border-color:#fff #716f64 #716f64 #fff;"></div><svg style="left:927px;top:115px" width="8" height="4" viewBox="0 0 8 4" ><path d="M0 0H7L3.5 4Z" fill="#000"/></svg>
<div style="left:946px;top:109px;width:1px;height:24px;background:#8c8c8c;"></div><div style="left:947px;top:109px;width:1px;height:24px;background:#ececec;"></div>
<svg style="left:948px;top:105px" width="32" height="32" viewBox="-16 -16 32 32"><path d="M-10 -10L-2 -2L-10 8Z" fill="#3c7078" stroke="#1a3a40"/><path d="M10 -10L2 -2L10 8Z" fill="#a8b4bc" stroke="#707880"/><path d="M0 -13V11" stroke="#e06060" stroke-width="1.6"/></svg>
<svg style="left:980px;top:105px" width="32" height="32" viewBox="-16 -16 32 32"><path d="M-11 1L-4 -7L3 0L-4 8Z" fill="#4a7880" stroke="#2a4a50"/><path d="M0 -7L5 -12L11 -6L6 -1Z" fill="#b8c4cc" stroke="#808890"/><path d="M-3 10L11 -5" stroke="#e05050" stroke-width="1.4"/></svg>
<svg style="left:1004px;top:131px" width="4" height="4" viewBox="0 0 4 4" ><path d="M4 0V4H0Z" fill="#000"/></svg>
<div style="left:1015px;top:109px;width:1px;height:24px;background:#8c8c8c;"></div><div style="left:1016px;top:109px;width:1px;height:24px;background:#ececec;"></div>
<svg style="left:1017px;top:105px" width="32" height="32" viewBox="-16 -16 32 32"><rect x="-11" y="-10" width="22" height="20" fill="#fff" stroke="#555"/><rect x="-11" y="-10" width="22" height="3" fill="#3838d0"/><path d="M-11 -5H11" stroke="#b0b0b0" stroke-width="0.8"/><path d="M-11 -1H11" stroke="#b0b0b0" stroke-width="0.8"/><path d="M-11 3H11" stroke="#b0b0b0" stroke-width="0.8"/><path d="M-11 7H11" stroke="#b0b0b0" stroke-width="0.8"/><path d="M-5 -7V10" stroke="#999"/><path d="M5 -7V10" stroke="#30b030" stroke-width="1.2"/><path d="M-9 -4H-7M-9 0H-7M-9 4H-7M-9 8H-7" stroke="#2828a0" stroke-width="1.4"/><path d="M-4 2L-1 -2L1 0L4 -1" fill="none" stroke="#d03030"/></svg>
<svg style="left:1050px;top:105px" width="32" height="32" viewBox="-16 -16 32 32"><rect x="-11" y="-12" width="22" height="23" fill="#c8c8c8" stroke="#222" stroke-width="1.2"/><rect x="-8" y="-9" width="16" height="5" fill="#f0d020" stroke="#222"/><rect x="-8" y="2" width="16" height="6" fill="#b8b8b8" stroke="#222"/><path d="M0 -4V0M-3 -2L0 2L3 -2Z" fill="#d02020" stroke="#d02020"/></svg>
<svg style="left:1082px;top:105px" width="32" height="32" viewBox="-16 -16 32 32"><defs><radialGradient id="bg1" cx="0.35" cy="0.3" r="0.75"><stop offset="0" stop-color="#8090c0"/><stop offset="1" stop-color="#101838"/></radialGradient></defs><circle cx="-6" cy="-7" r="5" fill="url(#bg1)"/><defs><radialGradient id="bg2" cx="0.35" cy="0.3" r="0.75"><stop offset="0" stop-color="#ffffff"/><stop offset="1" stop-color="#707070"/></radialGradient></defs><circle cx="5" cy="-7" r="5" fill="url(#bg2)"/><defs><radialGradient id="bg3" cx="0.35" cy="0.3" r="0.75"><stop offset="0" stop-color="#50a898"/><stop offset="1" stop-color="#083028"/></radialGradient></defs><circle cx="-6" cy="5" r="5" fill="url(#bg3)"/><defs><radialGradient id="bg4" cx="0.35" cy="0.3" r="0.75"><stop offset="0" stop-color="#d06060"/><stop offset="1" stop-color="#401010"/></radialGradient></defs><circle cx="5" cy="5" r="5" fill="url(#bg4)"/></svg>
<div style="left:1117px;top:109px;width:1px;height:24px;background:#8c8c8c;"></div><div style="left:1118px;top:109px;width:1px;height:24px;background:#ececec;"></div>
<svg style="left:1120px;top:105px" width="32" height="32" viewBox="-16 -16 32 32"><rect x="-12" y="-13" width="14" height="9" fill="#fff" stroke="#555"/><rect x="-12" y="-13" width="14" height="2.5" fill="#3838d0"/><g transform="translate(1,4)"><path d="M-8 -1C-9 4 -5 8 0 8C5 8 9 4 8 -1C5 -3 -5 -3 -8 -1Z" fill="#58a0a8" stroke="#1a4a50" stroke-width="0.9"/><path d="M-8 1C-11 0 -12 -3 -13 -5L-11 -5C-10 -3 -9 -2 -8 -2" fill="#58a0a8" stroke="#1a4a50" stroke-width="0.9"/><path d="M8 0C12 -1 12 5 7 5" fill="none" stroke="#1a4a50" stroke-width="1.4"/><ellipse cx="0" cy="-2" rx="5" ry="1.5" fill="#88c8d0" stroke="#1a4a50" stroke-width="0.7"/><circle cx="0" cy="-4.500000000000001" r="1.3" fill="#58a0a8" stroke="#1a4a50" stroke-width="0.7"/></g></svg>
<div style="left:1152px;top:107px;width:79px;height:21px;background:#e2e2e2;border:2px solid;border-color:#6e6e6e #f2f2f2 #f2f2f2 #6e6e6e;"></div><div class="t" style="left:1157px;top:110px;line-height:14px;"><span class="sl">Vista</span></div><div style="left:1213px;top:109px;width:16px;height:17px;background:#ece9d8;border:1px solid;border-color:#fff #716f64 #716f64 #fff;"></div><svg style="left:1217px;top:115px" width="8" height="4" viewBox="0 0 8 4" ><path d="M0 0H7L3.5 4Z" fill="#000"/></svg>
<svg style="left:1232px;top:105px" width="32" height="32" viewBox="-16 -16 32 32"><g transform="translate(0,3)"><path d="M-8 -1C-9 4 -5 8 0 8C5 8 9 4 8 -1C5 -3 -5 -3 -8 -1Z" fill="#58a0a8" stroke="#1a4a50" stroke-width="0.9"/><path d="M-8 1C-11 0 -12 -3 -13 -5L-11 -5C-10 -3 -9 -2 -8 -2" fill="#58a0a8" stroke="#1a4a50" stroke-width="0.9"/><path d="M8 0C12 -1 12 5 7 5" fill="none" stroke="#1a4a50" stroke-width="1.4"/><ellipse cx="0" cy="-2" rx="5" ry="1.5" fill="#88c8d0" stroke="#1a4a50" stroke-width="0.7"/><circle cx="0" cy="-4.500000000000001" r="1.3" fill="#58a0a8" stroke="#1a4a50" stroke-width="0.7"/></g></svg>
<svg style="left:1258px;top:131px" width="4" height="4" viewBox="0 0 4 4" ><path d="M4 0V4H0Z" fill="#000"/></svg>
<div style="left:1273px;top:104px;width:1px;height:35px;background:#8c8c8c;"></div>
<div style="left:1274px;top:104px;width:1px;height:35px;background:#f0f0f0;"></div>
<!-- views -->
<div style="left:0px;top:141px;width:546px;height:390px;background:#808080;border:2px solid #333a4c;overflow:hidden;"></div><svg style="left:2px;top:143px;overflow:hidden" width="542" height="386" viewBox="2 143 542 386" shape-rendering="crispEdges"><rect x="25" y="143" width="1" height="386" fill="#4a4a4a"/><rect x="95" y="143" width="1" height="386" fill="#4a4a4a"/><rect x="164" y="143" width="1" height="386" fill="#4a4a4a"/><rect x="234" y="143" width="1" height="386" fill="#4a4a4a"/><rect x="303" y="143" width="1" height="386" fill="#4a4a4a"/><rect x="373" y="143" width="1" height="386" fill="#4a4a4a"/><rect x="443" y="143" width="1" height="386" fill="#4a4a4a"/><rect x="512" y="143" width="1" height="386" fill="#4a4a4a"/><rect x="2" y="147" width="542" height="1" fill="#4a4a4a"/><rect x="2" y="217" width="542" height="1" fill="#4a4a4a"/><rect x="2" y="286" width="542" height="1" fill="#4a4a4a"/><rect x="2" y="356" width="542" height="1" fill="#4a4a4a"/><rect x="2" y="425" width="542" height="1" fill="#4a4a4a"/><rect x="2" y="495" width="542" height="1" fill="#4a4a4a"/><polygon points="174.9,182 189.9,182 177.6,496 164.6,496" fill="#fff"/><polygon points="293.1,182 279.1,182 292.4,496 303.4,496" fill="#fff"/><path d="M293.6 182L303.9 496M293.6 182L303.9 496M293.5 182L303.8 496M293.4 182L303.7 496M293.2 182L303.5 496M293 182L303.2 496M292.8 182L302.9 496M292.5 182L302.6 496M292.1 182L302.2 496M291.7 182L301.7 496M291.3 182L301.2 496M290.8 182L300.6 496M290.3 182L300 496M289.7 182L299.3 496M289.1 182L298.6 496M288.4 182L297.8 496M287.7 182L297 496M287 182L296.2 496M286.2 182L295.2 496M285.4 182L294.3 496M284.5 182L293.3 496M283.6 182L292.2 496M282.7 182L291.1 496M281.7 182L290 496M280.7 182L288.8 496M279.7 182L287.5 496M278.6 182L286.2 496M277.4 182L284.9 496M276.3 182L283.6 496M275.1 182L282.2 496M273.9 182L280.7 496M272.6 182L279.3 496M271.3 182L277.8 496M270 182L276.2 496M268.7 182L274.7 496M267.3 182L273.1 496M265.9 182L271.4 496M264.5 182L269.8 496M263.1 182L268.1 496M261.6 182L266.4 496M260.1 182L264.6 496M258.6 182L262.8 496M257.1 182L261.1 496M255.6 182L259.2 496M254 182L257.4 496M252.4 182L255.6 496M250.9 182L253.7 496M249.3 182L251.8 496M247.7 182L249.9 496M246 182L248 496M244.4 182L246.1 496M242.8 182L244.2 496M241.1 182L242.3 496M239.5 182L240.3 496M237.8 182L238.4 496M236.2 182L236.4 496M234.5 182L234.5 496M232.8 182L232.6 496M231.2 182L230.6 496M229.5 182L228.7 496M227.9 182L226.7 496M226.2 182L224.8 496M224.6 182L222.9 496M223 182L221 496M221.3 182L219.1 496M219.7 182L217.2 496M218.1 182L215.3 496M216.6 182L213.4 496M215 182L211.6 496M213.4 182L209.8 496M211.9 182L207.9 496M210.4 182L206.2 496M208.9 182L204.4 496M207.4 182L202.6 496M205.9 182L200.9 496M204.5 182L199.2 496M203.1 182L197.6 496M201.7 182L195.9 496M200.3 182L194.3 496M199 182L192.8 496M197.7 182L191.2 496M196.4 182L189.7 496M195.1 182L188.3 496M193.9 182L186.8 496M192.7 182L185.4 496M191.6 182L184.1 496M190.4 182L182.8 496M189.3 182L181.5 496M188.3 182L180.2 496M187.3 182L179 496M186.3 182L177.9 496M185.4 182L176.8 496M184.5 182L175.7 496M183.6 182L174.7 496M182.8 182L173.8 496M182 182L172.8 496M181.3 182L172 496M180.6 182L171.2 496M179.9 182L170.4 496M179.3 182L169.7 496M178.7 182L169 496M178.2 182L168.4 496M177.7 182L167.8 496M177.3 182L167.3 496M176.9 182L166.8 496M176.5 182L166.4 496M176.2 182L166.1 496M176 182L165.8 496M175.8 182L165.5 496M175.6 182L165.3 496M175.5 182L165.2 496M175.4 182L165.1 496M175.4 182L165.1 496" stroke="#fff" stroke-width="1" fill="none" /><rect x="175" y="182" width="214" height="1" fill="#fff"/><rect x="164" y="495" width="209" height="1" fill="#fff"/><path d="M388.5 182L372.5 496" stroke="#fff" stroke-width="1" fill="none" /><path d="M27.5 504.5L27.5 479.5" stroke="#00b000" stroke-width="1" fill="none"/><text x="28" y="478" font-size="10" font-family="Liberation Sans, sans-serif" fill="#00b000" font-weight="bold">y</text><path d="M27.5 504.5L53.5 504.5" stroke="#e00000" stroke-width="1" fill="none"/><text x="53" y="503" font-size="10" font-family="Liberation Sans, sans-serif" fill="#e00000" font-weight="bold">x</text><path d="M27.5 504.5L27.5 504.5" stroke="#0000e0" stroke-width="1" fill="none"/><text x="28" y="503" font-size="10" font-family="Liberation Sans, sans-serif" fill="#0000e0" font-weight="bold">z</text></svg><div class="t" style="left:6px;top:148px;color:#d6d6d6;"><span class="sl">Superior</span></div>
<div style="left:550px;top:141px;width:546px;height:390px;background:#808080;border:2px solid #333a4c;overflow:hidden;"></div><svg style="left:552px;top:143px;overflow:hidden" width="542" height="386" viewBox="552 143 542 386" shape-rendering="crispEdges"><rect x="593" y="143" width="1" height="386" fill="#4a4a4a"/><rect x="737" y="143" width="1" height="386" fill="#4a4a4a"/><rect x="881" y="143" width="1" height="386" fill="#4a4a4a"/><rect x="1024" y="143" width="1" height="386" fill="#4a4a4a"/><rect x="552" y="245" width="542" height="1" fill="#4a4a4a"/><rect x="552" y="389" width="542" height="1" fill="#000"/><path d="M878.8 395L878.5 392L878.1 389L877.6 386L877.1 383L876.5 380.1L875.9 377.1L875.2 374.2L874.4 371.3L873.6 368.4L872.7 365.5L871.7 362.6L870.7 359.8L869.7 356.9L868.5 354.1L867.3 351.3L866.1 348.6L864.8 345.9L863.4 343.2L862 340.5L860.5 337.9L859 335.3L857.4 332.7L855.8 330.1L854.1 327.6L852.4 325.2L850.6 322.7L848.7 320.3L846.8 318L844.9 315.7L842.9 313.4L840.9 311.2L838.8 309L836.7 306.8L834.5 304.7L832.3 302.7L830 300.7L827.7 298.7L825.4 296.8L823 295L820.6 293.2L818.1 291.4L815.6 289.7L813.1 288L810.5 286.4L807.9 284.9L805.3 283.4L802.6 282L799.9 280.6L797.2 279.3L794.5 278L791.7 276.8L788.9 275.7L786.1 274.6L783.2 273.6L780.4 272.6L777.5 271.7L774.6 270.8L771.7 270L768.7 269.3L765.8 268.7L762.8 268.1L759.9 267.5L756.9 267.1L753.9 266.6L750.9 266.3L747.9 266L744.9 265.8L741.8 265.6L738.8 265.5L735.8 265.5L732.8 265.5L729.8 265.6L726.7 265.8L723.7 266L720.7 266.3L717.7 266.6L714.7 267.1L711.7 267.5L708.8 268.1L705.8 268.7L702.9 269.3L699.9 270L697 270.8L694.1 271.7L691.2 272.6L688.4 273.6L685.5 274.6L682.7 275.7L679.9 276.8L677.1 278L674.4 279.3L671.7 280.6L669 282L666.3 283.4L663.7 284.9L661.1 286.4L658.5 288L656 289.7L653.5 291.4L651 293.2L648.6 295L646.2 296.8L643.9 298.7L641.6 300.7L639.3 302.7L637.1 304.7L634.9 306.8L632.8 309L630.7 311.2L628.7 313.4L626.7 315.7L624.8 318L622.9 320.3L621 322.7L619.2 325.2L617.5 327.6L615.8 330.1L614.2 332.7L612.6 335.3L611.1 337.9L609.6 340.5L608.2 343.2L606.8 345.9L605.5 348.6L604.3 351.3L603.1 354.1L601.9 356.9L600.9 359.8L599.9 362.6L598.9 365.5L598 368.4L597.2 371.3L596.4 374.2L595.7 377.1L595.1 380.1L594.5 383L594 386L593.5 389L593.1 392L592.8 395" stroke="#fff" fill="none" stroke-width="1"/><path d="M865.6 408.6L865.5 404.8L865.3 401L865.1 397.3L864.7 393.5L864.1 389.8L863.5 386.1L862.8 382.3L862 378.7L861 375L860 371.4L858.8 367.8L857.6 364.2L856.2 360.7L854.7 357.2L853.2 353.8L851.5 350.4L849.7 347L847.9 343.7L845.9 340.5L843.9 337.3L841.7 334.2L839.5 331.2L837.2 328.2L834.8 325.3L832.3 322.4L829.8 319.6L827.1 316.9L824.4 314.3L821.6 311.8L818.7 309.3L815.8 307L812.8 304.7L809.7 302.5L806.5 300.4L803.4 298.4L800.1 296.4L796.8 294.6L793.4 292.9L790 291.3L786.6 289.7L783.1 288.3L779.5 287L776 285.8L772.3 284.6L768.7 283.6L765 282.7L761.3 281.9L757.6 281.2L753.9 280.7L750.1 280.2L746.4 279.8L742.6 279.6L738.8 279.4L735.1 279.4L731.3 279.5L727.5 279.7L723.7 280L720 280.4L716.2 280.9L712.5 281.5L708.8 282.2L705.1 283.1L701.5 284L697.8 285.1L694.2 286.2L690.7 287.5L687.2 288.9L683.7 290.3L680.2 291.9L676.8 293.6L673.5 295.3L670.2 297.2L667 299.1L663.8 301.2L660.7 303.3L657.6 305.6L654.7 307.9L651.8 310.3L648.9 312.8L646.1 315.3L643.4 318L640.8 320.7L638.3 323.5L635.8 326.4L633.5 329.3L631.2 332.4L629 335.4L626.9 338.6L624.9 341.8L623 345L621.2 348.3L619.4 351.7L617.8 355.1L616.3 358.6L614.9 362.1L613.5 365.6L612.3 369.2L611.2 372.8L610.2 376.4L609.3 380.1L608.5 383.8L607.8 387.5L607.2 391.3L606.8 395" stroke="#fff" fill="none"/><path d="M845.1 408.4L845.1 405.2L844.9 402L844.7 398.9L844.4 395.7L844 392.6L843.5 389.4L842.9 386.3L842.2 383.2L841.5 380.1L840.6 377L839.7 374L838.6 371L837.5 368L836.3 365.1L835 362.2L833.6 359.3L832.2 356.5L830.6 353.7L829 350.9L827.3 348.3L825.6 345.6L823.7 343L821.8 340.5L819.8 338L817.7 335.6L815.6 333.3L813.4 331L811.1 328.8L808.7 326.6L806.3 324.5L803.9 322.5L801.4 320.6L798.8 318.7L796.2 316.9L793.5 315.2L790.8 313.5L788 312L785.2 310.5L782.3 309.1L779.4 307.8L776.5 306.6L773.5 305.4L770.5 304.4L767.5 303.4L764.4 302.5L761.4 301.7L758.3 301L755.1 300.4L752 299.9L748.8 299.5L745.7 299.1L742.5 298.9L739.3 298.8L736.2 298.7L733 298.7L729.8 298.9L726.6 299.1L723.5 299.4L720.3 299.8L717.2 300.3L714 300.9L710.9 301.6L707.8 302.3L704.8 303.2L701.7 304.1L698.7 305.2L695.8 306.3L692.8 307.5L689.9 308.8L687.1 310.2L684.2 311.6L681.4 313.2L678.7 314.8L676 316.5L673.4 318.3L670.8 320.1L668.3 322.1L665.8 324.1L663.4 326.1L661 328.3L658.7 330.5L656.5 332.8L654.4 335.1L652.3 337.5L650.3 340L648.3 342.5L646.5 345L644.7 347.7L642.9 350.3L641.3 353.1L639.7 355.8L638.3 358.7L636.9 361.5L635.6 364.4L634.3 367.3L633.2 370.3L632.1 373.3L631.2 376.3L630.3 379.4L629.5 382.5L628.8 385.6L628.2 388.7L627.7 391.8L627.3 395" stroke="#fff" fill="none"/><path d="M865.6 408.6L845.1 408.4M865.5 404.8L845.1 405.2M865.3 401L844.9 402M865.1 397.3L844.7 398.9M864.7 393.5L844.4 395.7M864.1 389.8L844 392.6M863.5 386.1L843.5 389.4M862.8 382.3L842.9 386.3M862 378.7L842.2 383.2M861 375L841.5 380.1M860 371.4L840.6 377M858.8 367.8L839.7 374M857.6 364.2L838.6 371M856.2 360.7L837.5 368M854.7 357.2L836.3 365.1M853.2 353.8L835 362.2M851.5 350.4L833.6 359.3M849.7 347L832.2 356.5M847.9 343.7L830.6 353.7M845.9 340.5L829 350.9M843.9 337.3L827.3 348.3M841.7 334.2L825.6 345.6M839.5 331.2L823.7 343M837.2 328.2L821.8 340.5M834.8 325.3L819.8 338M832.3 322.4L817.7 335.6M829.8 319.6L815.6 333.3M827.1 316.9L813.4 331M824.4 314.3L811.1 328.8M821.6 311.8L808.7 326.6M818.7 309.3L806.3 324.5M815.8 307L803.9 322.5M812.8 304.7L801.4 320.6M809.7 302.5L798.8 318.7M806.5 300.4L796.2 316.9M803.4 298.4L793.5 315.2M800.1 296.4L790.8 313.5M796.8 294.6L788 312M793.4 292.9L785.2 310.5M790 291.3L782.3 309.1M786.6 289.7L779.4 307.8M783.1 288.3L776.5 306.6M779.5 287L773.5 305.4M776 285.8L770.5 304.4M772.3 284.6L767.5 303.4M768.7 283.6L764.4 302.5M765 282.7L761.4 301.7M761.3 281.9L758.3 301M757.6 281.2L755.1 300.4M753.9 280.7L752 299.9M750.1 280.2L748.8 299.5M746.4 279.8L745.7 299.1M742.6 279.6L742.5 298.9M738.8 279.4L739.3 298.8M735.1 279.4L736.2 298.7M731.3 279.5L733 298.7M727.5 279.7L729.8 298.9M723.7 280L726.6 299.1M720 280.4L723.5 299.4M716.2 280.9L720.3 299.8M712.5 281.5L717.2 300.3M708.8 282.2L714 300.9M705.1 283.1L710.9 301.6M701.5 284L707.8 302.3M697.8 285.1L704.8 303.2M694.2 286.2L701.7 304.1M690.7 287.5L698.7 305.2M687.2 288.9L695.8 306.3M683.7 290.3L692.8 307.5M680.2 291.9L689.9 308.8M676.8 293.6L687.1 310.2M673.5 295.3L684.2 311.6M670.2 297.2L681.4 313.2M667 299.1L678.7 314.8M663.8 301.2L676 316.5M660.7 303.3L673.4 318.3M657.6 305.6L670.8 320.1M654.7 307.9L668.3 322.1M651.8 310.3L665.8 324.1M648.9 312.8L663.4 326.1M646.1 315.3L661 328.3M643.4 318L658.7 330.5M640.8 320.7L656.5 332.8M638.3 323.5L654.4 335.1M635.8 326.4L652.3 337.5M633.5 329.3L650.3 340M631.2 332.4L648.3 342.5M629 335.4L646.5 345M626.9 338.6L644.7 347.7M624.9 341.8L642.9 350.3M623 345L641.3 353.1M621.2 348.3L639.7 355.8M619.4 351.7L638.3 358.7M617.8 355.1L636.9 361.5M616.3 358.6L635.6 364.4M614.9 362.1L634.3 367.3M613.5 365.6L633.2 370.3M612.3 369.2L632.1 373.3M611.2 372.8L631.2 376.3M610.2 376.4L630.3 379.4M609.3 380.1L629.5 382.5M608.5 383.8L628.8 385.6M607.8 387.5L628.2 388.7M607.2 391.3L627.7 391.8M606.8 395L627.3 395" stroke="#fff" stroke-width="1" fill="none" /><rect x="592" y="395" width="37" height="1" fill="#fff"/><rect x="864.5" y="395.5" width="190" height="13" fill="none" stroke="#fff"/><rect x="1023" y="395" width="1" height="14" fill="#fff"/><rect x="858" y="394" width="98" height="1" fill="#fff"/><path d="M577.5 504.5L577.5 479.5" stroke="#0000e0" stroke-width="1" fill="none"/><text x="578" y="478" font-size="10" font-family="Liberation Sans, sans-serif" fill="#0000e0" font-weight="bold">z</text><path d="M577.5 504.5L603.5 504.5" stroke="#e00000" stroke-width="1" fill="none"/><text x="603" y="503" font-size="10" font-family="Liberation Sans, sans-serif" fill="#e00000" font-weight="bold">x</text><path d="M577.5 504.5L577.5 504.5" stroke="#00b000" stroke-width="1" fill="none"/><text x="578" y="503" font-size="10" font-family="Liberation Sans, sans-serif" fill="#00b000" font-weight="bold">y</text></svg><div class="t" style="left:556px;top:148px;color:#d6d6d6;"><span class="sl">Anterior</span></div>
<div style="left:0px;top:535px;width:546px;height:390px;background:#808080;border:2px solid #333a4c;overflow:hidden;"></div><svg style="left:2px;top:537px;overflow:hidden" width="542" height="386" viewBox="2 537 542 386" shape-rendering="crispEdges"><rect x="94" y="537" width="1" height="386" fill="#4a4a4a"/><rect x="197" y="537" width="1" height="386" fill="#4a4a4a"/><rect x="299" y="537" width="1" height="386" fill="#4a4a4a"/><rect x="402" y="537" width="1" height="386" fill="#4a4a4a"/><rect x="504" y="537" width="1" height="386" fill="#4a4a4a"/><rect x="2" y="562" width="542" height="1" fill="#4a4a4a"/><rect x="2" y="665" width="542" height="1" fill="#4a4a4a"/><rect x="2" y="870" width="542" height="1" fill="#4a4a4a"/><rect x="2" y="767" width="542" height="1" fill="#000"/><polygon points="43,693.0 506,678.0 506,704.0 43,715.0" fill="#fff"/><path d="M43 781.5L506 781.5M43 778.6L506 778.1M43 779.6L506 779.1M43 775.7L506 774.8M43 776.7L506 775.8M43 772.9L506 771.4M43 773.9L506 772.4M43 770L506 768.1M43 771L506 769.1M43 767.2L506 764.7M43 768.2L506 765.7M43 764.3L506 761.4M43 765.3L506 762.4M43 761.5L506 758.1M43 762.5L506 759.1M43 758.7L506 754.8M43 759.7L506 755.8M43 756L506 751.6M43 757L506 752.6M43 753.2L506 748.4M43 754.2L506 749.4M43 750.5L506 745.2M43 751.5L506 746.2M43 747.8L506 742.1M43 748.8L506 743.1M43 745.2L506 739M43 746.2L506 740M43 742.6L506 735.9M43 743.6L506 736.9M43 740L506 732.9M43 741L506 733.9M43 737.5L506 730M43 738.5L506 731M43 735L506 727.1M43 736L506 728.1M43 732.6L506 724.3M43 733.6L506 725.3M43 730.2L506 721.5M43 731.2L506 722.5M43 727.9L506 718.8M43 728.9L506 719.8M43 725.7L506 716.2M43 726.7L506 717.2M43 723.5L506 713.6M43 724.5L506 714.6M43 721.3L506 711.1M43 722.3L506 712.1M43 719.3L506 708.7M43 720.3L506 709.7M43 717.3L506 706.3M43 718.3L506 707.3M43 715.3L506 704.1M43 716.3L506 705.1M43 713.5L506 701.9M43 714.5L506 702.9M43 711.7L506 699.8M43 712.7L506 700.8M43 710L506 697.8M43 711L506 698.8M43 708.3L506 695.9M43 709.3L506 696.9M43 706.8L506 694M43 707.8L506 695M43 705.3L506 692.3M43 706.3L506 693.3M43 703.9L506 690.7M43 704.9L506 691.7M43 702.6L506 689.1M43 703.6L506 690.1M43 701.3L506 687.7M43 702.3L506 688.7M43 700.2L506 686.3M43 701.2L506 687.3M43 699.1L506 685.1M43 700.1L506 686.1M43 698.2L506 684M43 699.2L506 685M43 697.3L506 682.9M43 698.3L506 683.9M43 696.5L506 682M43 697.5L506 683M43 695.8L506 681.2M43 696.8L506 682.2M43 695.2L506 680.5M43 696.2L506 681.5M43 694.7L506 679.9M43 695.7L506 680.9M43 694.3L506 679.4M43 695.3L506 680.4M43 693.9L506 679M43 694.9L506 680M43 693.7L506 678.7M43 694.7L506 679.7M43 693.5L506 678.6M43 694.5L506 679.6M43 693.5L506 678.5M43 694.5L506 679.5" stroke="#fff" stroke-width="1" fill="none" /><rect x="43" y="693" width="1" height="89" fill="#fff"/><rect x="505" y="678" width="1" height="104" fill="#fff"/><rect x="43" y="781" width="463" height="1" fill="#fff"/><path d="M27.5 898.5L27.5 873.5" stroke="#0000e0" stroke-width="1" fill="none"/><text x="28" y="872" font-size="10" font-family="Liberation Sans, sans-serif" fill="#0000e0" font-weight="bold">z</text><path d="M27.5 898.5L4.5 898.5" stroke="#00b000" stroke-width="1" fill="none"/><text x="4" y="896" font-size="10" font-family="Liberation Sans, sans-serif" fill="#00b000" font-weight="bold">y</text><path d="M27.5 898.5L27.5 898.5" stroke="#e00000" stroke-width="1" fill="none"/><text x="28" y="893" font-size="10" font-family="Liberation Sans, sans-serif" fill="#e00000" font-weight="bold">x</text></svg><div class="t" style="left:6px;top:542px;color:#d6d6d6;"><span class="sl">Izquierda</span></div>
<div style="left:550px;top:535px;width:546px;height:390px;background:#808080;border:2px solid #ffff00;overflow:hidden;"></div><svg style="left:552px;top:537px;overflow:hidden" width="542" height="386" viewBox="552 537 542 386" shape-rendering="crispEdges"><path d="M-9609 9905.2L-817.7 1033.5M-8657 11275.8L-537.6 995.6M-6995.1 11848.5L-307.1 964.3M-5390.2 12401.5L-114 938.2M-3839.4 12935.9L50.1 916M-2340.1 13452.6L191.3 896.9M-986.8 15007L314.1 880.2M521.4 15508L421.8 865.7M2099.7 17248L517.1 852.8M2086.2 9164.5L602 841.3M2081.5 6374.2L678 831M2079.1 4960.4L746.6 821.7M2077.6 4106.1L808.8 813.3M2076.7 3533.9L865.4 805.6M2076 3124L917.1 798.6M2097.5 15935.9L2076 3124M364.5 15516L1841.1 2652.6M-1261 14184.1L1664.3 2298M-3094.6 13710.9L1526.6 2021.5M-4608.7 12437.9L1416.2 1800M-6542.2 11911.9L1325.7 1618.5M-8598.2 11352.4L1250.2 1467M-9263.7 9556.8L1186.3 1338.7M-4475.4 4724.7L1131.4 1228.7M-2856.9 3091.3L1083.9 1133.2M-2043.3 2270.4L1042.2 1049.6M-1553.9 1776.4L1005.5 975.8M-1227 1446.5L972.8 910.2M-993.2 1210.6L943.5 851.5M-817.7 1033.5L917.1 798.6" stroke="#4a4a4a" stroke-width="1" fill="none" /><path d="M888.9 862.8L785.2 648.9M889.6 861.8L785.6 647.9M890.3 860.9L785.9 646.8M890.9 859.9L786.2 645.8M891.5 859L786.4 644.8M892 858.1L786.6 643.8M892.5 857.2L786.8 642.8M892.9 856.3L786.9 641.8M893.2 855.4L786.9 640.7M893.5 854.6L787 639.7M893.6 853.7L786.9 638.7M893.8 852.9L786.8 637.7M893.8 852.1L786.7 636.8M893.9 851.3L786.5 635.8M893.8 850.5L786.3 634.8M893.7 849.8L786 633.9M893.4 849L785.7 632.9M893.2 848.3L785.3 632M892.8 847.6L784.9 631.1M892.4 847L784.4 630.2M892 846.3L783.9 629.3M891.4 845.7L783.4 628.5M890.8 845.1L782.7 627.6M890.1 844.6L782.1 626.8M889.4 844L781.4 626M888.6 843.5L780.6 625.2M887.7 843.1L779.8 624.5M886.7 842.6L779 623.8M885.7 842.2L778.1 623M884.6 841.8L777.2 622.4M883.5 841.5L776.2 621.7M882.3 841.2L775.2 621.1M881 840.9L774.2 620.5M879.6 840.7L773.1 619.9M878.2 840.5L771.9 619.4M876.8 840.3L770.8 618.9M875.2 840.2L769.6 618.4M873.7 840.1L768.3 618M872 840L767.1 617.5M870.3 840L765.8 617.2M868.6 840L764.4 616.8M866.8 840.1L763.1 616.5M865 840.2L761.7 616.3M863.1 840.3L760.3 616M861.1 840.5L758.8 615.8M859.1 840.7L757.4 615.7M857.1 840.9L755.9 615.5M855.1 841.2L754.4 615.4M853 841.5L752.8 615.4M850.9 841.9L751.3 615.4M848.7 842.3L749.7 615.4M846.5 842.7L748.2 615.5M844.3 843.2L746.6 615.6M842.1 843.7L745 615.7M839.8 844.3L743.4 615.9M837.6 844.9L741.8 616.1M835.3 845.5L740.2 616.4M833 846.1L738.6 616.7M830.7 846.8L737 617M828.4 847.5L735.4 617.3M826.1 848.3L733.8 617.7M823.8 849.1L732.3 618.2M821.5 849.9L730.7 618.7M819.2 850.7L729.1 619.2M816.9 851.6L727.6 619.7M814.7 852.5L726.1 620.3M812.4 853.4L724.5 620.9M810.2 854.3L723.1 621.5M808 855.3L721.6 622.2M805.8 856.3L720.1 622.9M803.7 857.3L718.7 623.6M801.6 858.3L717.3 624.4M799.5 859.4L715.9 625.2M797.5 860.4L714.6 626M795.5 861.5L713.3 626.8M793.5 862.6L712 627.7M791.6 863.7L710.8 628.6M789.7 864.8L709.6 629.5M787.9 865.9L708.4 630.4M786.2 867L707.3 631.4M784.5 868.1L706.2 632.4M782.8 869.3L705.2 633.4M781.2 870.4L704.2 634.4M779.7 871.5L703.2 635.4M778.3 872.7L702.3 636.4M776.9 873.8L701.4 637.4M775.5 874.9L700.6 638.5M774.3 876L699.9 639.6M773.1 877.2L699.1 640.6M772 878.3L698.5 641.7M770.9 879.4L697.8 642.8M770 880.4L697.3 643.9M769 881.5L696.8 645M768.2 882.6L696.3 646.1M767.5 883.6L695.9 647.2M766.8 884.6L695.5 648.2M766.2 885.7L695.2 649.3" stroke="#fff" stroke-width="1" fill="none" /><path d="M884.2 863.3L780.9 648.4M884.8 862.4L781.3 647.5M885.4 861.6L781.5 646.6M885.9 860.8L781.8 645.7M886.4 859.9L781.9 644.8M886.8 859.1L782.1 643.9M887.2 858.3L782.2 643M887.5 857.5L782.3 642.1M887.7 856.7L782.3 641.2M887.9 856L782.3 640.3M888.1 855.2L782.2 639.4M888.1 854.5L782.1 638.6M888.1 853.7L781.9 637.7M888.1 853L781.7 636.8M888 852.4L781.5 636M887.8 851.7L781.2 635.2M887.6 851.1L780.9 634.3M887.3 850.4L780.5 633.5M886.9 849.8L780.1 632.7M886.5 849.3L779.7 631.9M886 848.7L779.2 631.2M885.5 848.2L778.6 630.4M884.9 847.7L778.1 629.7M884.2 847.2L777.5 629M883.5 846.7L776.8 628.3M882.7 846.3L776.1 627.6M881.8 845.9L775.4 626.9M880.9 845.5L774.6 626.3M879.9 845.2L773.8 625.7M878.9 844.9L772.9 625.1M877.8 844.6L772 624.6M876.7 844.3L771.1 624M875.5 844.1L770.1 623.5M874.2 843.9L769.1 623M872.9 843.8L768.1 622.6M871.5 843.7L767 622.1M870.1 843.6L765.9 621.7M868.6 843.5L764.8 621.4M867.1 843.5L763.7 621M865.6 843.5L762.5 620.7M863.9 843.5L761.3 620.4M862.3 843.6L760 620.2M860.6 843.7L758.8 620M858.9 843.9L757.5 619.8M857.1 844L756.2 619.6M855.3 844.3L754.9 619.5M853.4 844.5L753.6 619.4M851.5 844.8L752.2 619.3M849.6 845.1L750.9 619.3M847.7 845.5L749.5 619.3M845.7 845.8L748.1 619.4M843.8 846.3L746.7 619.5M841.7 846.7L745.3 619.6M839.7 847.2L743.9 619.7M837.7 847.7L742.4 619.9M835.6 848.2L741 620.1M833.6 848.8L739.6 620.3M831.5 849.4L738.2 620.6M829.4 850.1L736.8 620.9M827.4 850.7L735.4 621.3M825.3 851.4L733.9 621.6M823.2 852.1L732.5 622M821.1 852.9L731.2 622.5M819.1 853.6L729.8 622.9M817.1 854.4L728.4 623.4M815 855.2L727.1 623.9M813 856.1L725.7 624.5M811 856.9L724.4 625.1M809.1 857.8L723.1 625.7M807.1 858.7L721.8 626.3M805.2 859.6L720.6 627M803.3 860.5L719.3 627.7M801.5 861.5L718.1 628.4M799.6 862.4L717 629.1M797.9 863.4L715.8 629.8M796.1 864.3L714.7 630.6M794.4 865.3L713.6 631.4M792.8 866.3L712.6 632.2M791.2 867.3L711.5 633.1M789.6 868.3L710.5 633.9M788.1 869.3L709.6 634.8M786.6 870.3L708.7 635.6M785.2 871.4L707.8 636.5M783.9 872.4L707 637.4M782.6 873.4L706.2 638.3M781.4 874.4L705.4 639.3M780.2 875.4L704.7 640.2M779.1 876.4L704.1 641.1M778 877.4L703.5 642.1M777.1 878.4L702.9 643.1M776.1 879.4L702.3 644M775.3 880.3L701.9 645M774.5 881.3L701.4 645.9M773.8 882.2L701 646.9M773.1 883.2L700.7 647.9M772.5 884.1L700.4 648.8M772 885L700.1 649.8" stroke="#fff" stroke-width="1" fill="none" stroke-dasharray="3 2"/><path d="M888.9 862.8L889.6 861.8L890.3 860.9L890.9 859.9L891.5 859L892 858.1L892.5 857.2L892.9 856.3L893.2 855.4L893.5 854.6L893.6 853.7L893.8 852.9L893.8 852.1L893.9 851.3L893.8 850.5L893.7 849.8L893.4 849L893.2 848.3L892.8 847.6L892.4 847L892 846.3L891.4 845.7L890.8 845.1L890.1 844.6L889.4 844L888.6 843.5L887.7 843.1L886.7 842.6L885.7 842.2L884.6 841.8L883.5 841.5L882.3 841.2L881 840.9L879.6 840.7L878.2 840.5L876.8 840.3L875.2 840.2L873.7 840.1L872 840L870.3 840L868.6 840L866.8 840.1L865 840.2L863.1 840.3L861.1 840.5L859.1 840.7L857.1 840.9L855.1 841.2L853 841.5L850.9 841.9L848.7 842.3L846.5 842.7L844.3 843.2L842.1 843.7L839.8 844.3L837.6 844.9L835.3 845.5L833 846.1L830.7 846.8L828.4 847.5L826.1 848.3L823.8 849.1L821.5 849.9L819.2 850.7L816.9 851.6L814.7 852.5L812.4 853.4L810.2 854.3L808 855.3L805.8 856.3L803.7 857.3L801.6 858.3L799.5 859.4L797.5 860.4L795.5 861.5L793.5 862.6L791.6 863.7L789.7 864.8L787.9 865.9L786.2 867L784.5 868.1L782.8 869.3L781.2 870.4L779.7 871.5L778.3 872.7L776.9 873.8L775.5 874.9L774.3 876L773.1 877.2L772 878.3L770.9 879.4L770 880.4L769 881.5L768.2 882.6L767.5 883.6L766.8 884.6L766.2 885.7" stroke="#fff" fill="none"/><path d="M881.6 864.1L882.2 863.3L882.8 862.5L883.3 861.7L883.8 860.9L884.2 860.1L884.6 859.4L884.9 858.6L885.1 857.9L885.3 857.1L885.5 856.4L885.6 855.7L885.6 855L885.6 854.3L885.5 853.7L885.3 853L885.1 852.4L884.9 851.8L884.6 851.2L884.2 850.7L883.7 850.2L883.2 849.6L882.7 849.2L882.1 848.7L881.4 848.3L880.6 847.8L879.8 847.4L879 847.1L878.1 846.8L877.1 846.4L876.1 846.2L875 845.9L873.9 845.7L872.7 845.5L871.5 845.4L870.2 845.2L868.9 845.1L867.5 845.1L866.1 845L864.6 845L863.1 845.1L861.5 845.1L859.9 845.2L858.3 845.3L856.6 845.5L854.9 845.7L853.1 845.9L851.3 846.2L849.5 846.5L847.7 846.8L845.8 847.1L844 847.5L842.1 847.9L840.1 848.4L838.2 848.8L836.3 849.3L834.3 849.9L832.3 850.4L830.4 851L828.4 851.6L826.4 852.3L824.5 852.9L822.5 853.6L820.5 854.4L818.6 855.1L816.6 855.9L814.7 856.6L812.8 857.4L810.9 858.3L809.1 859.1L807.2 859.9L805.4 860.8L803.6 861.7L801.9 862.6L800.2 863.5L798.5 864.4L796.9 865.4L795.3 866.3L793.7 867.2L792.2 868.2L790.8 869.1L789.4 870.1L788 871.1L786.7 872L785.4 873L784.2 873.9L783.1 874.9L782 875.8L781 876.8L780 877.7L779.1 878.7L778.2 879.6L777.5 880.5L776.7 881.4L776.1 882.3L775.5 883.2L774.9 884" stroke="#fff" fill="none"/><path d="M785.2 648.9L785.6 647.9L785.9 646.8L786.2 645.8L786.4 644.8L786.6 643.8L786.8 642.8L786.9 641.8L786.9 640.7L787 639.7L786.9 638.7L786.8 637.7L786.7 636.8L786.5 635.8L786.3 634.8L786 633.9L785.7 632.9L785.3 632L784.9 631.1L784.4 630.2L783.9 629.3L783.4 628.5L782.7 627.6L782.1 626.8L781.4 626L780.6 625.2L779.8 624.5L779 623.8L778.1 623L777.2 622.4L776.2 621.7L775.2 621.1L774.2 620.5L773.1 619.9L771.9 619.4L770.8 618.9L769.6 618.4L768.3 618L767.1 617.5L765.8 617.2L764.4 616.8L763.1 616.5L761.7 616.3L760.3 616L758.8 615.8L757.4 615.7L755.9 615.5L754.4 615.4L752.8 615.4L751.3 615.4L749.7 615.4L748.2 615.5L746.6 615.6L745 615.7L743.4 615.9L741.8 616.1L740.2 616.4L738.6 616.7L737 617L735.4 617.3L733.8 617.7L732.3 618.2L730.7 618.7L729.1 619.2L727.6 619.7L726.1 620.3L724.5 620.9L723.1 621.5L721.6 622.2L720.1 622.9L718.7 623.6L717.3 624.4L715.9 625.2L714.6 626L713.3 626.8L712 627.7L710.8 628.6L709.6 629.5L708.4 630.4L707.3 631.4L706.2 632.4L705.2 633.4L704.2 634.4L703.2 635.4L702.3 636.4L701.4 637.4L700.6 638.5L699.9 639.6L699.1 640.6L698.5 641.7L697.8 642.8L697.3 643.9L696.8 645L696.3 646.1L695.9 647.2L695.5 648.2L695.2 649.3" stroke="#fff" fill="none"/><path d="M778.8 648.9L779.1 648.1L779.4 647.2L779.6 646.3L779.8 645.5L780 644.6L780.1 643.8L780.2 642.9L780.2 642.1L780.2 641.2L780.1 640.4L780.1 639.6L779.9 638.7L779.8 637.9L779.6 637.1L779.3 636.3L779 635.5L778.7 634.8L778.3 634L777.9 633.3L777.4 632.5L777 631.8L776.4 631.1L775.9 630.4L775.2 629.8L774.6 629.1L773.9 628.5L773.2 627.9L772.4 627.3L771.6 626.8L770.8 626.2L769.9 625.7L769 625.2L768.1 624.7L767.1 624.3L766.2 623.9L765.1 623.5L764.1 623.1L763 622.8L761.9 622.5L760.8 622.2L759.6 622L758.4 621.7L757.2 621.6L756 621.4L754.8 621.3L753.5 621.2L752.3 621.1L751 621.1L749.7 621.1L748.4 621.1L747 621.1L745.7 621.2L744.4 621.4L743 621.5L741.7 621.7L740.4 621.9L739 622.1L737.7 622.4L736.3 622.7L735 623.1L733.7 623.4L732.4 623.8L731 624.2L729.7 624.7L728.5 625.2L727.2 625.7L725.9 626.2L724.7 626.8L723.5 627.4L722.3 628L721.1 628.6L720 629.2L718.8 629.9L717.7 630.6L716.7 631.3L715.6 632.1L714.6 632.8L713.6 633.6L712.7 634.4L711.8 635.2L710.9 636L710.1 636.8L709.2 637.7L708.5 638.5L707.8 639.4L707.1 640.3L706.4 641.2L705.8 642.1L705.2 643L704.7 643.9L704.2 644.8L703.8 645.7L703.4 646.6L703 647.5L702.7 648.4L702.4 649.3" stroke="#fff" fill="none"/><path d="M889.9 862.6L943.5 852.6L849.1 648.6L786.6 648.9Z" stroke="#fff" fill="none"/><path d="M887.3 865.7L940.8 855.6" stroke="#fff" fill="none"/><path d="M578.5 898.5L601.5 896.5" stroke="#e00000" stroke-width="1" fill="none"/><text x="602.9882738787456" y="894.3855855180378" font-size="10" font-family="Liberation Sans, sans-serif" fill="#e00000" font-weight="bold">x</text><path d="M578.5 898.5L569.5 878.5" stroke="#00b000" stroke-width="1" fill="none"/><text x="566.2640082865256" y="874.8982915638496" font-size="10" font-family="Liberation Sans, sans-serif" fill="#00b000" font-weight="bold">y</text><path d="M578.5 898.5L586.5 882.5" stroke="#0000e0" stroke-width="1" fill="none"/><text x="587.4392957560384" y="879.5891808909965" font-size="10" font-family="Liberation Sans, sans-serif" fill="#0000e0" font-weight="bold">z</text></svg><div class="t" style="left:556px;top:542px;color:#d6d6d6;"><span class="sl">Perspectiva</span></div>
<!-- panel -->
<div style="left:1097px;top:141px;width:183px;height:1px;background:#8a8a8a;"></div>
<div style="left:1099px;top:144px;width:28px;height:26px;border:1px solid;border-color:#f2f2f2 #8a8a8a transparent #f2f2f2;"></div>
<div style="left:1128px;top:145px;width:28px;height:24px;border:1px solid;border-color:#eaeaea #8a8a8a #f2f2f2 #eaeaea;"></div>
<div style="left:1157px;top:145px;width:28px;height:24px;border:1px solid;border-color:#eaeaea #8a8a8a #f2f2f2 #eaeaea;"></div>
<div style="left:1186px;top:145px;width:28px;height:24px;border:1px solid;border-color:#eaeaea #8a8a8a #f2f2f2 #eaeaea;"></div>
<div style="left:1215px;top:145px;width:28px;height:24px;border:1px solid;border-color:#eaeaea #8a8a8a #f2f2f2 #eaeaea;"></div>
<div style="left:1244px;top:145px;width:28px;height:24px;border:1px solid;border-color:#eaeaea #8a8a8a #f2f2f2 #eaeaea;"></div>
<div style="left:1127px;top:169px;width:150px;height:1px;background:#f2f2f2;"></div>
<div style="left:1097px;top:169px;width:3px;height:1px;background:#f2f2f2;"></div>
<svg style="left:1097px;top:141px" width="32" height="32" viewBox="-16 -16 32 32"><defs><radialGradient id="star"><stop offset="0" stop-color="#fffff0"/><stop offset="0.5" stop-color="#f6f2c8" stop-opacity="0.8"/><stop offset="1" stop-color="#f6f2c8" stop-opacity="0"/></radialGradient></defs><circle cx="-5" cy="-6" r="6" fill="url(#star)"/><path d="M-4 -5L-2 5L0.5 2L6 7.500000000000001L7.500000000000001 6L2 1L5.500000000000001 -0.5Z" fill="#fff" stroke="#222" stroke-width="0.9"/></svg>
<svg style="left:1126px;top:141px" width="32" height="32" viewBox="-16 -16 32 32"><path d="M-9 9C-9 -2 -2 -9 9 -9L9 -5C1 -5 -5 1 -5 9Z" fill="#6878a8" stroke="#283058"/><path d="M-7 9C-7 -1 -1 -7 9 -7" fill="none" stroke="#c0c8e0" stroke-width="1.2"/><path d="M-10 -9V10M-10 -9H-6M9 4V9H4" fill="none" stroke="#333" stroke-width="0.8" stroke-dasharray="1 1"/></svg>
<svg style="left:1155px;top:141px" width="32" height="32" viewBox="-16 -16 32 32"><path d="M0 -5V4M0 -2L-8 4M0 -2L8 4" stroke="#444" fill="none"/><rect x="-3.5" y="-11" width="7" height="7" fill="#e0e0f0" stroke="#5a5a8c"/><rect x="-10.5" y="4" width="5" height="5" fill="#e8e8f4" stroke="#5a5a8c"/><rect x="-2.5" y="4" width="5" height="5" fill="#e8e8f4" stroke="#5a5a8c"/><rect x="5.5" y="4" width="5" height="5" fill="#e8e8f4" stroke="#5a5a8c"/></svg>
<svg style="left:1184px;top:141px" width="32" height="32" viewBox="-16 -16 32 32"><circle cx="2" cy="0" r="7" fill="#ddd" stroke="#111" stroke-width="2.2"/><path d="M2 -5V5M-3 0H7M-1.5 -3.5L5.500000000000001 3.5M-1.5 3.5L5.500000000000001 -3.5" stroke="#555" stroke-width="0.8"/><circle cx="2" cy="0" r="1.6" fill="#e02020"/><path d="M-8 -6C-10 -2 -10 2 -8 6M-11 -5C-13 -2 -13 2 -11 5" fill="none" stroke="#555"/></svg>
<svg style="left:1213px;top:141px" width="32" height="32" viewBox="-16 -16 32 32"><rect x="-9" y="-8" width="18" height="14" rx="1.5" fill="#fff" stroke="#222" stroke-width="2.2"/><rect x="-4" y="-5" width="3" height="7" fill="#3858c8"/><path d="M-1 3L2 -5L5 3Z" fill="#e02020"/><rect x="-5" y="8" width="10" height="2" fill="#506850"/></svg>
<svg style="left:1242px;top:141px" width="32" height="32" viewBox="-16 -16 32 32"><path d="M-1.5 -6L1.5 -6L2.2 10C2.2 11.5 -2.2 11.5 -2.2 10Z" fill="#b02828" stroke="#1a1a1a" stroke-width="0.9"/><path d="M-0.5 -5V10" stroke="#e88" stroke-width="0.8"/><path d="M-9 -10H-3L-2 -11H2C6 -11 8.5 -9 9.5 -6.500000000000001C7.500000000000001 -8 5 -8.5 2.5 -8L2 -6H-2L-3 -7.500000000000001H-9Z" fill="#5a5a5a" stroke="#111" stroke-width="0.9" stroke-linejoin="round"/></svg>
<div style="left:1105px;top:179px;width:23px;height:22px;background:#f2cb4f;border:1px solid;border-color:#707070 #f4f4f4 #f4f4f4 #707070;"></div>
<svg style="left:1101px;top:174px" width="32" height="32" viewBox="-16 -16 32 32"><defs><radialGradient id="geo" cx="0.35" cy="0.3" r="0.8"><stop offset="0" stop-color="#e8e8e8"/><stop offset="0.5" stop-color="#808080"/><stop offset="1" stop-color="#1a1a1a"/></radialGradient></defs><circle cx="0" cy="0.5" r="7" fill="url(#geo)"/></svg>
<svg style="left:1125px;top:174px" width="32" height="32" viewBox="-16 -16 32 32"><rect x="-8" y="-6" width="9" height="9" fill="#c8c8d0" stroke="#666"/><path d="M1 -8L7 2H-2Z" fill="#999" stroke="#444"/><circle cx="1" cy="3" r="4.500000000000001" fill="#fff" stroke="#222" stroke-width="1.2"/><circle cx="1" cy="3" r="1" fill="#222"/></svg>
<svg style="left:1149px;top:174px" width="32" height="32" viewBox="-16 -16 32 32"><path d="M-2 -1L1 7L7 8Z" fill="#f8f0a0" stroke="#d8d070" stroke-width="0.5"/><path d="M-8 -7L-5 -9L0 -3L-3 -1Z" fill="#333" stroke="#111"/><path d="M-8 -7L-5 -9L-4 -7.500000000000001L-7 -5.500000000000001Z" fill="#e8e8e8" stroke="#111" stroke-width="0.7"/><path d="M-2 -2L8 8" stroke="#222" stroke-width="1.2"/></svg>
<svg style="left:1173px;top:174px" width="32" height="32" viewBox="-16 -16 32 32"><circle cx="-4" cy="-5" r="3" fill="#fff" stroke="#111" stroke-width="1.4"/><circle cx="3" cy="-5" r="3" fill="#fff" stroke="#111" stroke-width="1.4"/><rect x="-7" y="-1" width="11" height="7" fill="#444" stroke="#111"/><path d="M4 1L8 -1V6L4 4Z" fill="#111"/><rect x="-5" y="1" width="5" height="2" fill="#e06060"/><rect x="-4" y="6" width="5" height="2" fill="#111"/></svg>
<svg style="left:1197px;top:174px" width="32" height="32" viewBox="-16 -16 32 32"><rect x="-8" y="-6" width="13" height="11" fill="#d8d8e0" stroke="#777"/><circle cx="-2" cy="-1" r="3.5" fill="#f4f4f4" stroke="#999"/><path d="M-8 6H9" stroke="#555"/><path d="M5 1L7 6H5Z" fill="#e02020"/></svg>
<svg style="left:1221px;top:174px" width="32" height="32" viewBox="-16 -16 32 32"><path d="M-8 -4C-5 -8 -3 0 0 -4C3 -8 5 0 8 -4M-8 1C-5 -3 -3 5 0 1C3 -3 5 5 8 1M-8 6C-5 2 -3 10 0 6C3 2 5 10 8 6" fill="none" stroke="#384080" stroke-width="1"/></svg>
<svg style="left:1245px;top:174px" width="32" height="32" viewBox="-16 -16 32 32"><circle cx="-3" cy="-4" r="3.5" fill="none" stroke="#222" stroke-width="2.6" stroke-dasharray="1.6 1.3"/><circle cx="-3" cy="-4" r="2.0" fill="#777" stroke="#222"/><circle cx="3" cy="3" r="4.500000000000001" fill="none" stroke="#222" stroke-width="2.6" stroke-dasharray="1.6 1.3"/><circle cx="3" cy="3" r="3.000000000000001" fill="#777" stroke="#222"/></svg>
<div style="left:1118px;top:208px;width:140px;height:19px;background:#e4e4e4;border:2px solid;border-color:#6e6e6e #f2f2f2 #f2f2f2 #6e6e6e;"></div>
<div class="t" style="left:1122px;top:211px;"><span class="sl">Primitivas estándar</span></div>
<div style="left:1241px;top:210px;width:16px;height:15px;background:#ece9d8;border:1px solid;border-color:#fff #716f64 #716f64 #fff;"></div>
<svg style="left:1245px;top:216px" width="8" height="4" viewBox="0 0 8 4" ><path d="M0 0H7L3.5 4Z" fill="#000"/></svg>
<div style="left:1100px;top:235px;width:175px;height:731px;border:1px solid;border-color:#858585 #f2f2f2 #f2f2f2 #858585;"></div>
<div style="left:1101px;top:236px;width:173px;height:729px;border-top:1px solid #f2f2f2;border-left:1px solid #f2f2f2;"></div>
<div style="left:1105px;top:248px;width:163px;height:135px;border:1px solid #f2f2f2;"></div><div style="left:1104px;top:247px;width:163px;height:135px;border:1px solid #858585;"></div>
<div style="left:1107px;top:240px;width:158px;height:16px;background:#b9b9b9;border:1px solid #000;"></div><div class="fc" style="left:1107px;top:241px;width:158px;height:14px;line-height:14px;"><span class="sc">Tipo de objeto</span></div><div class="t" style="left:1114px;top:241px;font-size:11px;">-</div>
<div class="t" style="left:1152px;top:259px;color:#8c8c8c;text-shadow:1px 1px 0 #e8e8e8;"><span class="sl">CuadrAuto</span></div>
<div style="left:1212px;top:259px;width:13px;height:13px;border:1px solid;border-color:#6e6e6e #f2f2f2 #f2f2f2 #6e6e6e;"></div>
<div style="left:1213px;top:260px;width:11px;height:11px;border:1px solid;border-color:#9a9a9a transparent transparent #9a9a9a;"></div>
<div class="btn fc" style="left:1107px;top:277px;width:78px;height:18px;line-height:16px;"><span class="sc">Caja</span></div>
<div class="btn fc" style="left:1187px;top:277px;width:77px;height:18px;line-height:16px;"><span class="sc">Cono</span></div>
<div class="btn fc" style="left:1107px;top:298px;width:78px;height:18px;line-height:16px;"><span class="sc">Esfera</span></div>
<div class="btn fc" style="left:1187px;top:298px;width:77px;height:18px;line-height:16px;"><span class="sc">Geoesfera</span></div>
<div class="btn fc" style="left:1107px;top:319px;width:78px;height:18px;line-height:16px;"><span class="sc">Cilindro</span></div>
<div class="btn fc" style="left:1187px;top:319px;width:77px;height:18px;line-height:16px;"><span class="sc">Tubo</span></div>
<div class="btn fc" style="left:1107px;top:341px;width:78px;height:18px;line-height:16px;"><span class="sc">Toroide</span></div>
<div class="btn fc" style="left:1187px;top:341px;width:77px;height:18px;line-height:16px;"><span class="sc">Pirámide</span></div>
<div class="btn fc" style="left:1107px;top:362px;width:78px;height:18px;line-height:16px;"><span class="sc">Tetera</span></div>
<div class="btn fc" style="left:1187px;top:362px;width:77px;height:18px;line-height:16px;"><span class="sc">Plano</span></div>
<div style="left:1105px;top:399px;width:163px;height:42px;border:1px solid #f2f2f2;"></div><div style="left:1104px;top:398px;width:163px;height:42px;border:1px solid #858585;"></div>
<div style="left:1107px;top:390px;width:158px;height:16px;background:#b9b9b9;border:1px solid #000;"></div><div class="fc" style="left:1107px;top:391px;width:158px;height:14px;line-height:14px;"><span class="sc">Nombre y color</span></div><div class="t" style="left:1114px;top:391px;font-size:11px;">-</div>
<div style="left:1112px;top:414px;width:130px;height:19px;background:#e2e2e2;border:1px solid;border-left-width:2px;border-color:#1a1a1a #f2f2f2 #f2f2f2 #1a1a1a;"></div>
<div style="left:1247px;top:414px;width:16px;height:19px;background:#8e0838;border:1px solid;border-color:#6e6e6e #f2f2f2 #f2f2f2 #6e6e6e;"></div>
<!-- bottom -->
<div style="left:0px;top:925px;width:1097px;height:18px;background:#c8c8c8;"></div>
<div class="btn fc" style="left:0px;top:925px;width:16px;height:17px;line-height:15px;"></div>
<svg style="left:4px;top:929px" width="8" height="9" viewBox="0 0 8 9" ><path d="M6.500000000000001 0.5L1.5 4.500000000000001L6.500000000000001 8.5" fill="none" stroke="#000" stroke-width="1.1"/></svg>
<div style="left:16px;top:925px;width:125px;height:17px;background:#c8c8c8;border:1px solid;border-color:#f4f4f4 #000 #000 #f4f4f4;"></div>
<div class="fc" style="left:16px;top:927px;width:124px;height:13px;line-height:13px;"><span class="sc">0 / 100</span></div>
<div class="btn fc" style="left:141px;top:925px;width:16px;height:17px;line-height:15px;"></div>
<svg style="left:145px;top:929px" width="8" height="9" viewBox="0 0 8 9" ><path d="M1.5 0.5L6.500000000000001 4.500000000000001L1.5 8.5" fill="none" stroke="#000" stroke-width="1.1"/></svg>
<div style="left:0px;top:943px;width:1097px;height:1px;background:#e4e4e4;"></div>
<div style="left:0px;top:944px;width:1097px;height:1px;background:#8e8e8e;"></div>
<svg style="left:0;top:0" width="1097" height="1024" viewBox="0 0 1097 1024" shape-rendering="crispEdges"><rect x="54" y="945" width="1" height="24" fill="#9a9a9a"/><rect x="64" y="945" width="1" height="11" fill="#8c8c8c"/><rect x="74" y="945" width="1" height="11" fill="#8c8c8c"/><rect x="83" y="945" width="1" height="11" fill="#8c8c8c"/><rect x="93" y="945" width="1" height="11" fill="#8c8c8c"/><rect x="103" y="945" width="1" height="24" fill="#9a9a9a"/><rect x="113" y="945" width="1" height="11" fill="#8c8c8c"/><rect x="123" y="945" width="1" height="11" fill="#8c8c8c"/><rect x="133" y="945" width="1" height="11" fill="#8c8c8c"/><rect x="143" y="945" width="1" height="11" fill="#8c8c8c"/><rect x="153" y="945" width="1" height="24" fill="#9a9a9a"/><rect x="162" y="945" width="1" height="11" fill="#8c8c8c"/><rect x="172" y="945" width="1" height="11" fill="#8c8c8c"/><rect x="182" y="945" width="1" height="11" fill="#8c8c8c"/><rect x="192" y="945" width="1" height="11" fill="#8c8c8c"/><rect x="202" y="945" width="1" height="24" fill="#9a9a9a"/><rect x="212" y="945" width="1" height="11" fill="#8c8c8c"/><rect x="222" y="945" width="1" height="11" fill="#8c8c8c"/><rect x="232" y="945" width="1" height="11" fill="#8c8c8c"/><rect x="242" y="945" width="1" height="11" fill="#8c8c8c"/><rect x="251" y="945" width="1" height="24" fill="#9a9a9a"/><rect x="261" y="945" width="1" height="11" fill="#8c8c8c"/><rect x="271" y="945" width="1" height="11" fill="#8c8c8c"/><rect x="281" y="945" width="1" height="11" fill="#8c8c8c"/><rect x="291" y="945" width="1" height="11" fill="#8c8c8c"/><rect x="301" y="945" width="1" height="24" fill="#9a9a9a"/><rect x="311" y="945" width="1" height="11" fill="#8c8c8c"/><rect x="321" y="945" width="1" height="11" fill="#8c8c8c"/><rect x="330" y="945" width="1" height="11" fill="#8c8c8c"/><rect x="340" y="945" width="1" height="11" fill="#8c8c8c"/><rect x="350" y="945" width="1" height="24" fill="#9a9a9a"/><rect x="360" y="945" width="1" height="11" fill="#8c8c8c"/><rect x="370" y="945" width="1" height="11" fill="#8c8c8c"/><rect x="380" y="945" width="1" height="11" fill="#8c8c8c"/><rect x="390" y="945" width="1" height="11" fill="#8c8c8c"/><rect x="400" y="945" width="1" height="24" fill="#9a9a9a"/><rect x="409" y="945" width="1" height="11" fill="#8c8c8c"/><rect x="419" y="945" width="1" height="11" fill="#8c8c8c"/><rect x="429" y="945" width="1" height="11" fill="#8c8c8c"/><rect x="439" y="945" width="1" height="11" fill="#8c8c8c"/><rect x="449" y="945" width="1" height="24" fill="#9a9a9a"/><rect x="459" y="945" width="1" height="11" fill="#8c8c8c"/><rect x="469" y="945" width="1" height="11" fill="#8c8c8c"/><rect x="479" y="945" width="1" height="11" fill="#8c8c8c"/><rect x="489" y="945" width="1" height="11" fill="#8c8c8c"/><rect x="498" y="945" width="1" height="24" fill="#9a9a9a"/><rect x="508" y="945" width="1" height="11" fill="#8c8c8c"/><rect x="518" y="945" width="1" height="11" fill="#8c8c8c"/><rect x="528" y="945" width="1" height="11" fill="#8c8c8c"/><rect x="538" y="945" width="1" height="11" fill="#8c8c8c"/><rect x="548" y="945" width="1" height="24" fill="#9a9a9a"/><rect x="558" y="945" width="1" height="11" fill="#8c8c8c"/><rect x="568" y="945" width="1" height="11" fill="#8c8c8c"/><rect x="577" y="945" width="1" height="11" fill="#8c8c8c"/><rect x="587" y="945" width="1" height="11" fill="#8c8c8c"/><rect x="597" y="945" width="1" height="24" fill="#9a9a9a"/><rect x="607" y="945" width="1" height="11" fill="#8c8c8c"/><rect x="617" y="945" width="1" height="11" fill="#8c8c8c"/><rect x="627" y="945" width="1" height="11" fill="#8c8c8c"/><rect x="637" y="945" width="1" height="11" fill="#8c8c8c"/><rect x="647" y="945" width="1" height="24" fill="#9a9a9a"/><rect x="656" y="945" width="1" height="11" fill="#8c8c8c"/><rect x="666" y="945" width="1" height="11" fill="#8c8c8c"/><rect x="676" y="945" width="1" height="11" fill="#8c8c8c"/><rect x="686" y="945" width="1" height="11" fill="#8c8c8c"/><rect x="696" y="945" width="1" height="24" fill="#9a9a9a"/><rect x="706" y="945" width="1" height="11" fill="#8c8c8c"/><rect x="716" y="945" width="1" height="11" fill="#8c8c8c"/><rect x="726" y="945" width="1" height="11" fill="#8c8c8c"/><rect x="736" y="945" width="1" height="11" fill="#8c8c8c"/><rect x="745" y="945" width="1" height="24" fill="#9a9a9a"/><rect x="755" y="945" width="1" height="11" fill="#8c8c8c"/><rect x="765" y="945" width="1" height="11" fill="#8c8c8c"/><rect x="775" y="945" width="1" height="11" fill="#8c8c8c"/><rect x="785" y="945" width="1" height="11" fill="#8c8c8c"/><rect x="795" y="945" width="1" height="24" fill="#9a9a9a"/><rect x="805" y="945" width="1" height="11" fill="#8c8c8c"/><rect x="815" y="945" width="1" height="11" fill="#8c8c8c"/><rect x="824" y="945" width="1" height="11" fill="#8c8c8c"/><rect x="834" y="945" width="1" height="11" fill="#8c8c8c"/><rect x="844" y="945" width="1" height="24" fill="#9a9a9a"/><rect x="854" y="945" width="1" height="11" fill="#8c8c8c"/><rect x="864" y="945" width="1" height="11" fill="#8c8c8c"/><rect x="874" y="945" width="1" height="11" fill="#8c8c8c"/><rect x="884" y="945" width="1" height="11" fill="#8c8c8c"/><rect x="894" y="945" width="1" height="24" fill="#9a9a9a"/><rect x="903" y="945" width="1" height="11" fill="#8c8c8c"/><rect x="913" y="945" width="1" height="11" fill="#8c8c8c"/><rect x="923" y="945" width="1" height="11" fill="#8c8c8c"/><rect x="933" y="945" width="1" height="11" fill="#8c8c8c"/><rect x="943" y="945" width="1" height="24" fill="#9a9a9a"/><rect x="953" y="945" width="1" height="11" fill="#8c8c8c"/><rect x="963" y="945" width="1" height="11" fill="#8c8c8c"/><rect x="973" y="945" width="1" height="11" fill="#8c8c8c"/><rect x="983" y="945" width="1" height="11" fill="#8c8c8c"/><rect x="992" y="945" width="1" height="24" fill="#9a9a9a"/><rect x="1002" y="945" width="1" height="11" fill="#8c8c8c"/><rect x="1012" y="945" width="1" height="11" fill="#8c8c8c"/><rect x="1022" y="945" width="1" height="11" fill="#8c8c8c"/><rect x="1032" y="945" width="1" height="11" fill="#8c8c8c"/><rect x="1042" y="945" width="1" height="24" fill="#9a9a9a"/></svg>
<div style="left:40px;top:956px;width:30px;height:12px;text-align:center;line-height:12px;font-size:11.5px;background:transparent;"><span style="background:#c8c8c8;padding:0 0.5px">0</span></div>
<div style="left:89px;top:956px;width:30px;height:12px;text-align:center;line-height:12px;font-size:11.5px;background:transparent;"><span style="background:#c8c8c8;padding:0 0.5px">5</span></div>
<div style="left:138px;top:956px;width:30px;height:12px;text-align:center;line-height:12px;font-size:11.5px;background:transparent;"><span style="background:#c8c8c8;padding:0 0.5px">10</span></div>
<div style="left:188px;top:956px;width:30px;height:12px;text-align:center;line-height:12px;font-size:11.5px;background:transparent;"><span style="background:#c8c8c8;padding:0 0.5px">15</span></div>
<div style="left:237px;top:956px;width:30px;height:12px;text-align:center;line-height:12px;font-size:11.5px;background:transparent;"><span style="background:#c8c8c8;padding:0 0.5px">20</span></div>
<div style="left:287px;top:956px;width:30px;height:12px;text-align:center;line-height:12px;font-size:11.5px;background:transparent;"><span style="background:#c8c8c8;padding:0 0.5px">25</span></div>
<div style="left:336px;top:956px;width:30px;height:12px;text-align:center;line-height:12px;font-size:11.5px;background:transparent;"><span style="background:#c8c8c8;padding:0 0.5px">30</span></div>
<div style="left:385px;top:956px;width:30px;height:12px;text-align:center;line-height:12px;font-size:11.5px;background:transparent;"><span style="background:#c8c8c8;padding:0 0.5px">35</span></div>
<div style="left:435px;top:956px;width:30px;height:12px;text-align:center;line-height:12px;font-size:11.5px;background:transparent;"><span style="background:#c8c8c8;padding:0 0.5px">40</span></div>
<div style="left:484px;top:956px;width:30px;height:12px;text-align:center;line-height:12px;font-size:11.5px;background:transparent;"><span style="background:#c8c8c8;padding:0 0.5px">45</span></div>
<div style="left:534px;top:956px;width:30px;height:12px;text-align:center;line-height:12px;font-size:11.5px;background:transparent;"><span style="background:#c8c8c8;padding:0 0.5px">50</span></div>
<div style="left:583px;top:956px;width:30px;height:12px;text-align:center;line-height:12px;font-size:11.5px;background:transparent;"><span style="background:#c8c8c8;padding:0 0.5px">55</span></div>
<div style="left:632px;top:956px;width:30px;height:12px;text-align:center;line-height:12px;font-size:11.5px;background:transparent;"><span style="background:#c8c8c8;padding:0 0.5px">60</span></div>
<div style="left:682px;top:956px;width:30px;height:12px;text-align:center;line-height:12px;font-size:11.5px;background:transparent;"><span style="background:#c8c8c8;padding:0 0.5px">65</span></div>
<div style="left:731px;top:956px;width:30px;height:12px;text-align:center;line-height:12px;font-size:11.5px;background:transparent;"><span style="background:#c8c8c8;padding:0 0.5px">70</span></div>
<div style="left:781px;top:956px;width:30px;height:12px;text-align:center;line-height:12px;font-size:11.5px;background:transparent;"><span style="background:#c8c8c8;padding:0 0.5px">75</span></div>
<div style="left:830px;top:956px;width:30px;height:12px;text-align:center;line-height:12px;font-size:11.5px;background:transparent;"><span style="background:#c8c8c8;padding:0 0.5px">80</span></div>
<div style="left:879px;top:956px;width:30px;height:12px;text-align:center;line-height:12px;font-size:11.5px;background:transparent;"><span style="background:#c8c8c8;padding:0 0.5px">85</span></div>
<div style="left:929px;top:956px;width:30px;height:12px;text-align:center;line-height:12px;font-size:11.5px;background:transparent;"><span style="background:#c8c8c8;padding:0 0.5px">90</span></div>
<div style="left:978px;top:956px;width:30px;height:12px;text-align:center;line-height:12px;font-size:11.5px;background:transparent;"><span style="background:#c8c8c8;padding:0 0.5px">95</span></div>
<div style="left:1028px;top:956px;width:30px;height:12px;text-align:center;line-height:12px;font-size:11.5px;background:transparent;"><span style="background:#c8c8c8;padding:0 0.5px">100</span></div>
<div style="left:50px;top:945px;width:9px;height:25px;background:rgba(120,170,225,0.45);border:1px solid #6b8fbc;"></div>
<div style="left:58px;top:969px;width:985px;height:1px;background:#f0f0f0;"></div>
<div style="left:1097px;top:968px;width:183px;height:1px;background:#8a8a8a;"></div>
<div style="left:1097px;top:969px;width:183px;height:1px;background:#f0f0f0;"></div>
<svg style="left:13px;top:949px" width="18" height="17" viewBox="0 0 18 17" ><rect x="0.5" y="0.5" width="16" height="5" fill="#e8e8e8" stroke="#000" stroke-width="1.2"/><path d="M2 3.5C4 1 6 5 8 3.5H15" fill="none" stroke="#000" stroke-width="0.8"/><rect x="0.5" y="13.5" width="16" height="2.5" fill="#e8e8e8" stroke="#000" stroke-width="1.2"/><path d="M4 12V7.500000000000001M2 9.5L4 7.500000000000001L6 9.5M13 7.500000000000001V12M11 10L13 12L15 10" fill="none" stroke="#000" stroke-width="1.1"/></svg>
<div style="left:2px;top:974px;width:296px;height:19px;background:#dcc1c1;border:1px solid;border-color:#7a7a7a #f4f4f4 #f4f4f4 #7a7a7a;"></div>
<div class="t" style="left:5px;top:977px;font-family:'Liberation Mono',monospace;font-size:11.5px;">delete $</div>
<div style="left:2px;top:996px;width:296px;height:21px;background:#fff;border:1px solid;border-color:#7a7a7a #f4f4f4 #f4f4f4 #7a7a7a;"></div>
<div style="left:302px;top:972px;width:2px;height:47px;background:#e8e8e8;"></div>
<div style="left:304px;top:972px;width:1px;height:47px;background:#6e6e6e;"></div>
<div style="left:307px;top:974px;width:128px;height:21px;background:#c8c8c8;border:1px solid;border-color:#7a7a7a #f4f4f4 #f4f4f4 #7a7a7a;"></div>
<div class="t" style="left:313px;top:978px;"><span class="sl">Ninguno seleccionado</span></div>
<div style="left:307px;top:999px;width:424px;height:21px;background:#c8c8c8;border:1px solid;border-color:#7a7a7a #f4f4f4 #f4f4f4 #7a7a7a;"></div>
<div class="t" style="left:313px;top:1002px;"><span class="sl">Haga clic o haga clic y arrastre para seleccionar objetos</span></div>
<svg style="left:443px;top:977px" width="10" height="13" viewBox="0 0 10 13" ><path d="M2.5 6V3.5C2.5 0.5 7.500000000000001 0.5 7.500000000000001 3.5V6" fill="none" stroke="#111" stroke-width="1.4"/><rect x="0" y="5.500000000000001" width="10" height="1.6" fill="#111"/><rect x="0" y="8" width="10" height="1.6" fill="#111"/><rect x="0" y="10.5" width="10" height="1.8" fill="#111"/></svg>
<svg style="left:468px;top:976px" width="16" height="16" viewBox="0 0 16 16" ><rect x="0.5" y="0.5" width="14" height="14" fill="none" stroke="#000" stroke-width="1.3"/><path d="M7.500000000000001 1V14M1 7.500000000000001H14" stroke="#555" stroke-width="0.8"/><circle cx="7.500000000000001" cy="7.500000000000001" r="2" fill="#808080" stroke="#000"/></svg>
<div class="t" style="left:490px;top:978px;"><span class="sl">X:</span></div>
<div style="left:501px;top:975px;width:58px;height:19px;background:#e2e2e2;border:1px solid;border-left-width:2px;border-color:#1a1a1a #f4f4f4 #f4f4f4 #1a1a1a;"></div>
<div class="t" style="left:572px;top:978px;"><span class="sl">Y:</span></div>
<div style="left:583px;top:975px;width:58px;height:19px;background:#e2e2e2;border:1px solid;border-left-width:2px;border-color:#1a1a1a #f4f4f4 #f4f4f4 #1a1a1a;"></div>
<div class="t" style="left:654px;top:978px;"><span class="sl">Z:</span></div>
<div style="left:665px;top:975px;width:58px;height:19px;background:#e2e2e2;border:1px solid;border-left-width:2px;border-color:#1a1a1a #f4f4f4 #f4f4f4 #1a1a1a;"></div>
<div style="left:737px;top:974px;width:100px;height:21px;background:#c8c8c8;border:1px solid;border-color:#7a7a7a #f4f4f4 #f4f4f4 #7a7a7a;"></div>
<div style="left:742px;top:978px;width:94px;height:13px;overflow:hidden;white-space:nowrap;line-height:13px;"><span class="sl">Cuadrícula = 10,0cm</span></div>
<div style="left:737px;top:999px;width:100px;height:21px;background:#c8c8c8;border:1px solid;border-color:#7a7a7a #f4f4f4 #f4f4f4 #7a7a7a;"></div>
<div style="left:742px;top:1002px;width:94px;height:13px;overflow:hidden;white-space:nowrap;line-height:13px;"><span class="sl">Añadir señal tiempo</span></div>
<div class="btn fc" style="left:839px;top:973px;width:42px;height:44px;line-height:42px;"></div>
<svg style="left:848px;top:988px" width="26" height="12" viewBox="0 0 26 12" ><circle cx="4.500000000000001" cy="5.500000000000001" r="3.6" fill="none" stroke="#000" stroke-width="1.8"/><path d="M8 5.500000000000001H24" stroke="#000" stroke-width="2"/><path d="M17 6V10H19V8H21V10H23V6Z" fill="#000"/></svg>
<div class="btn fc" style="left:885px;top:974px;width:48px;height:21px;line-height:19px;"><span class="sc">Key auto</span></div>
<div class="btn fc" style="left:885px;top:996px;width:48px;height:21px;line-height:19px;"><span class="sc">Def. key</span></div>
<div style="left:936px;top:974px;width:115px;height:20px;background:#e2e2e2;border:2px solid;border-color:#6e6e6e #f2f2f2 #f2f2f2 #6e6e6e;"></div>
<div class="t" style="left:941px;top:978px;"><span class="sl">Selección</span></div>
<div style="left:1032px;top:976px;width:17px;height:16px;background:#ece9d8;border:1px solid;border-color:#fff #716f64 #716f64 #fff;"></div>
<svg style="left:1037px;top:982px" width="8" height="4" viewBox="0 0 8 4" ><path d="M0 0H7L3.5 4Z" fill="#000"/></svg>
<div class="btn fc" style="left:937px;top:996px;width:114px;height:21px;line-height:19px;"><span class="sc">Filtros de keys...</span></div>
<svg style="left:1052px;top:968px" width="32" height="32" viewBox="-16 -16 32 32"><rect x="-9" y="-4.500000000000001" width="2" height="9" fill="#000"/><path d="M-7 0L0 -4.500000000000001V4.500000000000001ZM0 0L7.500000000000001 -4.500000000000001V4.500000000000001Z" fill="#000"/></svg>
<div style="left:1081px;top:975px;width:1px;height:18px;background:#8a8a8a;"></div><div style="left:1082px;top:975px;width:1px;height:18px;background:#f0f0f0;"></div>
<svg style="left:1079px;top:968px" width="32" height="32" viewBox="-16 -16 32 32"><path d="M-7 0L0 -4V4Z" fill="#000"/><rect x="1" y="-4" width="2" height="8" fill="#000"/><rect x="4.500000000000001" y="-4" width="2" height="8" fill="#000"/></svg>
<div style="left:1109px;top:976px;width:17px;height:16px;border:2px solid #000;"></div>
<svg style="left:1102px;top:968px" width="32" height="32" viewBox="-16 -16 32 32"><path d="M-3 -4L4 0L-3 4Z" fill="#000"/></svg>
<svg style="left:1124px;top:990px" width="3" height="3" viewBox="0 0 3 3" ><path d="M3 0V3H0Z" fill="#000"/></svg>
<svg style="left:1123px;top:968px" width="32" height="32" viewBox="-16 -16 32 32"><path d="M7 0L0 -4V4Z" fill="#000"/><rect x="-3" y="-4" width="2" height="8" fill="#000"/><rect x="-6.500000000000001" y="-4" width="2" height="8" fill="#000"/></svg>
<div style="left:1153px;top:975px;width:1px;height:18px;background:#8a8a8a;"></div><div style="left:1154px;top:975px;width:1px;height:18px;background:#f0f0f0;"></div>
<svg style="left:1150px;top:968px" width="32" height="32" viewBox="-16 -16 32 32"><rect x="7" y="-4.500000000000001" width="2" height="9" fill="#000"/><path d="M7 0L0 -4.500000000000001V4.500000000000001ZM0 0L-7.500000000000001 -4.500000000000001V4.500000000000001Z" fill="#000"/></svg>
<div style="left:1182px;top:975px;width:1px;height:18px;background:#8a8a8a;"></div><div style="left:1183px;top:975px;width:1px;height:18px;background:#f0f0f0;"></div>
<svg style="left:1052px;top:990px" width="32" height="32" viewBox="-16 -16 32 32"><rect x="-6" y="-4" width="1.5" height="8" fill="#000"/><rect x="4.500000000000001" y="-4" width="1.5" height="8" fill="#000"/><path d="M-4.500000000000001 0L-1 -3V3ZM4.500000000000001 0L1 -3V3Z" fill="#000"/><path d="M-2 0H2" stroke="#000"/></svg>
<div style="left:1081px;top:997px;width:1px;height:18px;background:#8a8a8a;"></div><div style="left:1082px;top:997px;width:1px;height:18px;background:#f0f0f0;"></div>
<div style="left:1084px;top:997px;width:68px;height:20px;background:#e2e2e2;border:1px solid;border-left-width:2px;border-color:#1a1a1a #f4f4f4 #f4f4f4 #1a1a1a;"></div>
<div class="t" style="left:1089px;top:1000px;"><span class="sl">0</span></div>
<div style="left:1153px;top:997px;width:1px;height:18px;background:#8a8a8a;"></div><div style="left:1154px;top:997px;width:1px;height:18px;background:#f0f0f0;"></div>
<svg style="left:1150px;top:990px" width="32" height="32" viewBox="-16 -16 32 32"><rect x="-7" y="-6" width="10" height="9" fill="#e8e8e8" stroke="#222"/><rect x="-7" y="-6" width="10" height="2" fill="#444"/><circle cx="3" cy="2" r="4.500000000000001" fill="#f4e8e8" stroke="#c02020" stroke-width="1.2"/><path d="M3 -1V2H5.500000000000001" stroke="#222" fill="none"/></svg>
<div style="left:1182px;top:997px;width:1px;height:18px;background:#8a8a8a;"></div><div style="left:1183px;top:997px;width:1px;height:18px;background:#f0f0f0;"></div>
<svg style="left:1179px;top:968px" width="32" height="32" viewBox="-16 -16 32 32"><g transform="translate(0,0)"><circle cx="-2" cy="-2" r="4.2" fill="#e8ecf8" stroke="#181880" stroke-width="1.3"/><path d="M1 1L6 6" stroke="#181880" stroke-width="2.2"/></g></svg>
<svg style="left:1202px;top:968px" width="32" height="32" viewBox="-16 -16 32 32"><path d="M-2 -7H8V3H-2ZM3 -7V3M-2 -2H8" fill="none" stroke="#a02020" stroke-width="1.2"/><g transform="translate(-4,3) scale(0.75)"><g transform="translate(0,0)"><circle cx="-2" cy="-2" r="4.2" fill="#e8ecf8" stroke="#181880" stroke-width="1.3"/><path d="M1 1L6 6" stroke="#181880" stroke-width="2.2"/></g></g></svg>
<svg style="left:1225px;top:990px" width="3" height="3" viewBox="0 0 3 3" ><path d="M3 0V3H0Z" fill="#000"/></svg>
<svg style="left:1225px;top:968px" width="32" height="32" viewBox="-16 -16 32 32"><path d="M-5 -2L-2 -5H6V3L3 6H-5Z" fill="#dde0f0" stroke="#181880" stroke-width="1.1"/><path d="M-5 -2H3V6M3 -2L6 -5" fill="none" stroke="#181880" stroke-width="1.1"/><path d="M-8 -4V-7H-5M5 -7H8V-4M-8 4V7H-5M8 4V7H5" fill="none" stroke="#000" stroke-width="1.2"/></svg>
<svg style="left:1248px;top:990px" width="3" height="3" viewBox="0 0 3 3" ><path d="M3 0V3H0Z" fill="#000"/></svg>
<svg style="left:1248px;top:968px" width="32" height="32" viewBox="-16 -16 32 32"><path d="M-2 -7H8V3H-2ZM3 -7V3M-2 -2H8" fill="none" stroke="#a02020" stroke-width="1.2"/><g transform="translate(-3,2) scale(0.8)"><path d="M-5 -2L-2 -5H6V3L3 6H-5Z" fill="#dde0f0" stroke="#181880" stroke-width="1.1"/><path d="M-5 -2H3V6M3 -2L6 -5" fill="none" stroke="#181880" stroke-width="1.1"/></g></svg>
<svg style="left:1271px;top:990px" width="3" height="3" viewBox="0 0 3 3" ><path d="M3 0V3H0Z" fill="#000"/></svg>
<svg style="left:1179px;top:990px" width="32" height="32" viewBox="-16 -16 32 32"><rect x="-8" y="-7" width="15" height="14" fill="#e4e4e4" stroke="#000" stroke-width="1.2" stroke-dasharray="2 1.5"/><g transform="translate(0,0)"><circle cx="-2" cy="-2" r="4.2" fill="#e8ecf8" stroke="#181880" stroke-width="1.3"/><path d="M1 1L6 6" stroke="#181880" stroke-width="2.2"/></g></svg>
<svg style="left:1202px;top:1013px" width="3" height="3" viewBox="0 0 3 3" ><path d="M3 0V3H0Z" fill="#000"/></svg>
<svg style="left:1202px;top:990px" width="32" height="32" viewBox="-16 -16 32 32"><path d="M-5 1L-7 -2C-8 -4 -6 -5 -5 -3L-4 -1V-6C-4 -8 -2 -8 -2 -6V-7C-2 -9 0 -9 0 -7V-6C0 -8 2 -8 2 -6V-5C2 -7 4 -7 4 -5V2C4 5 2 7 0 7H-2C-4 7 -4 4 -5 1Z" fill="#fff" stroke="#222" stroke-width="0.9"/></svg>
<svg style="left:1225px;top:990px" width="32" height="32" viewBox="-16 -16 32 32"><path d="M0 -8V1L-7 6M0 1L8 3" fill="none" stroke="#181880" stroke-width="1.2"/><path d="M-2 -6L0 -9L2 -6M6 1L9 3L6 5M-7 3V6H-4" fill="none" stroke="#000" stroke-width="1.1"/><circle cx="0" cy="1" r="4" fill="none" stroke="#181880"/></svg>
<svg style="left:1248px;top:1013px" width="3" height="3" viewBox="0 0 3 3" ><path d="M3 0V3H0Z" fill="#000"/></svg>
<svg style="left:1248px;top:990px" width="32" height="32" viewBox="-16 -16 32 32"><rect x="-8" y="-8" width="12" height="12" fill="#e4e6f4" stroke="#181880" stroke-width="1.2"/><rect x="0" y="0" width="8" height="8" fill="#e4e6f4" stroke="#181880" stroke-width="1.2"/><path d="M-5 -5L2 2M-5 -2V-5H-2" fill="none" stroke="#000" stroke-dasharray="1.5 1"/></svg>
<div style="left:0px;top:1019px;width:1280px;height:1px;background:#f4f4f0;"></div>
<div style="left:0px;top:1020px;width:1280px;height:4px;background:linear-gradient(#3a84ea,#2c6fe0);"></div>
</body></html>
